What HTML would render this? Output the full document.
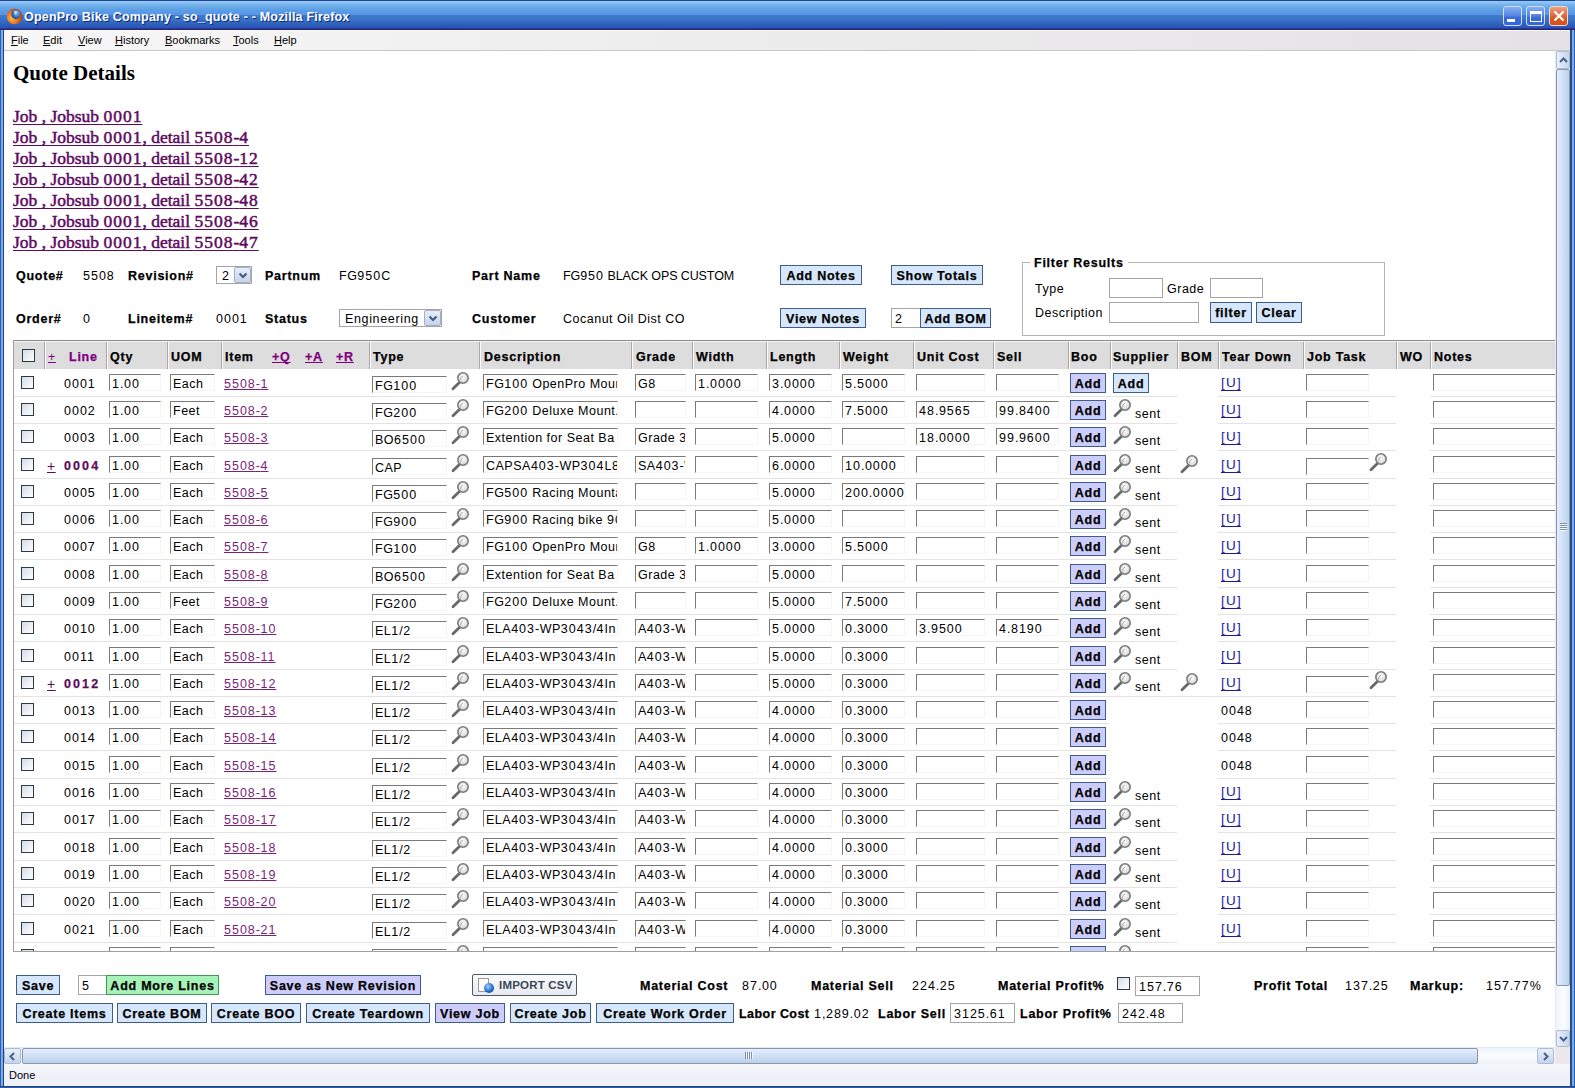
<!DOCTYPE html><html><head><meta charset="utf-8"><style>
*{margin:0;padding:0;box-sizing:border-box;text-decoration-skip-ink:none}
html,body{width:1575px;height:1088px;overflow:hidden;background:#fff;font-family:"Liberation Sans", sans-serif;}
.a{position:absolute;white-space:nowrap}
.t{position:absolute;white-space:nowrap;font-size:12.5px;color:#000;line-height:1;letter-spacing:0.5px}
.b{font-weight:bold;letter-spacing:0.75px;-webkit-text-stroke:0.25px currentColor}
i.d{font-style:normal;letter-spacing:1px}
.b .nb i.d{letter-spacing:2.1px}
.b i.d, .btn i.d{letter-spacing:1.6px}
.inp{position:absolute;background:#fff;border-top:1px solid #7a7a7a;border-left:1px solid #7a7a7a;border-right:1px solid #f5f5f5;border-bottom:1px solid #f5f5f5;overflow:hidden}
.inp span{position:absolute;left:2px;top:3px;font-size:12.5px;line-height:1;white-space:nowrap;letter-spacing:0.5px}
.inp2{position:absolute;background:#fff;border:1px solid #a5a5a5;overflow:hidden}
.inp2 span{position:absolute;left:3px;top:4px;font-size:12.5px;line-height:1;white-space:nowrap;letter-spacing:0.5px}
.btn{position:absolute;background:#d6e6fb;border:1px solid #3e5d8a;font-weight:bold;font-size:12.5px;line-height:1;text-align:center;white-space:nowrap;color:#000;letter-spacing:0.75px;-webkit-text-stroke:0.25px #000}
.btn span{position:absolute;left:0;right:0;top:4px}
.pur{background:#cdcdfb}
.grn{background:#a6f2b8;border-color:#3f9a5a}
.cb{position:absolute;width:13px;height:13px;border:1px solid #2e3a46;background:linear-gradient(135deg,#d4dce6 0%,#eef2f6 60%,#fbfcfd 100%)}
.lnk{color:#7a1f7a;text-decoration:underline}
.sep{position:absolute;height:1px;background:#e3e3e3}
</style></head><body>
<div class="a" style="left:0;top:0;width:1575px;height:1088px;background:#2c58c4"></div>
<div class="a" style="left:0;top:0;width:1575px;height:30px;background:linear-gradient(#1a4888 0px,#1a4888 1px,#9ccaff 1px,#88bcf4 3px,#6cb0e6 6px,#5c9ee6 10px,#5a94e8 14.5px,#3a7cc8 15.5px,#3a6fcc 20px,#2e62b4 24px,#2a56c0 27px,#3048b8 28px,#24286e 29px,#24286e 30px)"></div>
<svg class="a" style="left:5px;top:7px" width="18" height="18" viewBox="0 0 18 18"><defs><radialGradient id="ffg" cx="0.6" cy="0.35" r="0.6"><stop offset="0" stop-color="#7ec0f0"/><stop offset="1" stop-color="#1e4fa0"/></radialGradient><radialGradient id="ffo" cx="0.35" cy="0.6" r="0.7"><stop offset="0" stop-color="#ffc040"/><stop offset="0.6" stop-color="#e86a1a"/><stop offset="1" stop-color="#a83010"/></radialGradient></defs><circle cx="9.5" cy="9.5" r="7.8" fill="url(#ffo)"/><circle cx="10.8" cy="7.6" r="4.6" fill="url(#ffg)"/><path d="M9 4.5 Q11 3.5 12.5 5 Q11 6 10.5 8 Q9.5 6.5 9 4.5Z" fill="#f0f4ff" opacity="0.8"/></svg>
<div class="a" style="left:24px;top:10px;font-size:12.5px;font-weight:bold;color:#fff;text-shadow:1px 1px 0 #0a2a80;letter-spacing:0.2px">OpenPro Bike Company - so_quote - - Mozilla Firefox</div>
<div class="a" style="left:1503px;top:6px;width:19px;height:20px;border:1px solid #d0e0fa;border-radius:3px;background:linear-gradient(#86aef2,#5a88e6 45%,#3a6ad8 60%,#3466d6)"><div class="a" style="left:3px;top:12px;width:8px;height:3px;background:#fff"></div></div>
<div class="a" style="left:1526px;top:6px;width:19px;height:20px;border:1px solid #d0e0fa;border-radius:3px;background:linear-gradient(#86aef2,#5a88e6 45%,#3a6ad8 60%,#3466d6)"><div class="a" style="left:3px;top:4px;width:12px;height:11px;border:1px solid #fff;border-top:3px solid #fff"></div></div>
<div class="a" style="left:1549px;top:6px;width:19px;height:20px;border:1px solid #f2d8cc;border-radius:3px;background:linear-gradient(#eca088,#e0703e 45%,#d85a24 60%,#d45020)"><svg class="a" style="left:3px;top:3px" width="12" height="12"><path d="M1.5 1.5 L10.5 10.5 M10.5 1.5 L1.5 10.5" stroke="#fff" stroke-width="2.2"/></svg></div>
<div class="a" style="left:4px;top:30px;width:1566px;height:21px;background:linear-gradient(to right,#f7f7f7,#efeeef 40%,#e4e2e4);border-top:1px solid #fafafa;border-bottom:1px solid #c8c8c8"></div>
<div class="a" style="left:11px;top:34px;font-size:11px;color:#000"><u style="text-decoration:underline">F</u>ile</div>
<div class="a" style="left:43px;top:34px;font-size:11px;color:#000"><u style="text-decoration:underline">E</u>dit</div>
<div class="a" style="left:78px;top:34px;font-size:11px;color:#000"><u style="text-decoration:underline">V</u>iew</div>
<div class="a" style="left:115px;top:34px;font-size:11px;color:#000"><u style="text-decoration:underline">H</u>istory</div>
<div class="a" style="left:165px;top:34px;font-size:11px;color:#000"><u style="text-decoration:underline">B</u>ookmarks</div>
<div class="a" style="left:233px;top:34px;font-size:11px;color:#000"><u style="text-decoration:underline">T</u>ools</div>
<div class="a" style="left:274px;top:34px;font-size:11px;color:#000"><u style="text-decoration:underline">H</u>elp</div>
<div class="a" style="left:4px;top:51px;width:1566px;height:997px;background:#fff"></div>
<svg width="0" height="0" style="position:absolute"><defs><radialGradient id="mgrad" cx="0.45" cy="0.4" r="0.65"><stop offset="0" stop-color="#ffffff"/><stop offset="1" stop-color="#d0d0d0"/></radialGradient></defs></svg>
<div class="a" style="left:13px;top:61px;font-family:'Liberation Serif',serif;font-size:21px;font-weight:bold;color:#000">Quote Details</div>
<div class="a lnk" style="left:13px;top:108px;font-family:'Liberation Serif',serif;font-size:17.5px;line-height:1;color:#5e0a5e;-webkit-text-stroke:0.5px #5e0a5e;text-underline-offset:2px">Job , Jobsub <i class="d">0001</i></div>
<div class="a lnk" style="left:13px;top:129px;font-family:'Liberation Serif',serif;font-size:17.5px;line-height:1;color:#5e0a5e;-webkit-text-stroke:0.5px #5e0a5e;text-underline-offset:2px">Job , Jobsub <i class="d">0001</i>, detail <i class="d">5508</i>-<i class="d">4</i></div>
<div class="a lnk" style="left:13px;top:150px;font-family:'Liberation Serif',serif;font-size:17.5px;line-height:1;color:#5e0a5e;-webkit-text-stroke:0.5px #5e0a5e;text-underline-offset:2px">Job , Jobsub <i class="d">0001</i>, detail <i class="d">5508</i>-<i class="d">12</i></div>
<div class="a lnk" style="left:13px;top:171px;font-family:'Liberation Serif',serif;font-size:17.5px;line-height:1;color:#5e0a5e;-webkit-text-stroke:0.5px #5e0a5e;text-underline-offset:2px">Job , Jobsub <i class="d">0001</i>, detail <i class="d">5508</i>-<i class="d">42</i></div>
<div class="a lnk" style="left:13px;top:192px;font-family:'Liberation Serif',serif;font-size:17.5px;line-height:1;color:#5e0a5e;-webkit-text-stroke:0.5px #5e0a5e;text-underline-offset:2px">Job , Jobsub <i class="d">0001</i>, detail <i class="d">5508</i>-<i class="d">48</i></div>
<div class="a lnk" style="left:13px;top:213px;font-family:'Liberation Serif',serif;font-size:17.5px;line-height:1;color:#5e0a5e;-webkit-text-stroke:0.5px #5e0a5e;text-underline-offset:2px">Job , Jobsub <i class="d">0001</i>, detail <i class="d">5508</i>-<i class="d">46</i></div>
<div class="a lnk" style="left:13px;top:234px;font-family:'Liberation Serif',serif;font-size:17.5px;line-height:1;color:#5e0a5e;-webkit-text-stroke:0.5px #5e0a5e;text-underline-offset:2px">Job , Jobsub <i class="d">0001</i>, detail <i class="d">5508</i>-<i class="d">47</i></div>
<div class="t b" style="left:16px;top:270px;">Quote#</div>
<div class="t" style="left:83px;top:270px;"><i class="d">5508</i></div>
<div class="t b" style="left:128px;top:270px;">Revision#</div>
<div class="t b" style="left:265px;top:270px;">Partnum</div>
<div class="t" style="left:339px;top:270px;">FG<i class="d">950</i>C</div>
<div class="t b" style="left:472px;top:270px;">Part Name</div>
<div class="t" style="left:563px;top:270px;letter-spacing:-0.1px">FG<i class="d">950</i> BLACK OPS CUSTOM</div>
<div class="t b" style="left:16px;top:313px;">Order#</div>
<div class="t" style="left:83px;top:313px;"><i class="d">0</i></div>
<div class="t b" style="left:128px;top:313px;">Lineitem#</div>
<div class="t" style="left:216px;top:313px;"><i class="d">0001</i></div>
<div class="t b" style="left:265px;top:313px;">Status</div>
<div class="t b" style="left:472px;top:313px;">Customer</div>
<div class="t" style="left:563px;top:313px;">Cocanut Oil Dist CO</div>
<div class="a" style="left:216px;top:266px;width:36px;height:18px;border:1px solid #a4a4a4;background:#fff"><span class="a" style="left:5px;top:2px;font-size:12.5px;letter-spacing:0.65px"><i class="d">2</i></span><div class="a" style="right:0;top:0;width:17px;height:16px;background:linear-gradient(#e6eefb,#c4d4ee);border:1px solid #a8b0c0;border-radius:2px"><svg class="a" style="left:3px;top:4px" width="10" height="7"><path d="M1.5 1.5 L5 5 L8.5 1.5" stroke="#4a5a78" stroke-width="2.2" fill="none"/></svg></div></div>
<div class="a" style="left:339px;top:309px;width:103px;height:18px;border:1px solid #a4a4a4;background:#fff"><span class="a" style="left:5px;top:2px;font-size:12.5px;letter-spacing:0.65px">Engineering</span><div class="a" style="right:0;top:0;width:17px;height:16px;background:linear-gradient(#e6eefb,#c4d4ee);border:1px solid #a8b0c0;border-radius:2px"><svg class="a" style="left:3px;top:4px" width="10" height="7"><path d="M1.5 1.5 L5 5 L8.5 1.5" stroke="#4a5a78" stroke-width="2.2" fill="none"/></svg></div></div>
<div class="btn " style="left:780px;top:265px;width:82px;height:20px"><span style="top:4px">Add Notes</span></div>
<div class="btn " style="left:891px;top:265px;width:92px;height:20px"><span style="top:4px">Show Totals</span></div>
<div class="btn " style="left:780px;top:308px;width:86px;height:20px"><span style="top:4px">View Notes</span></div>
<div class="inp2" style="left:891px;top:308px;width:30px;height:20px"><span style="top:4px"><i class="d">2</i></span></div>
<div class="btn " style="left:920px;top:308px;width:71px;height:20px"><span style="top:4px">Add BOM</span></div>
<div class="a" style="left:1022px;top:262px;width:363px;height:74px;border:1px solid #b4b4b4"></div>
<div class="a b" style="left:1030px;top:257px;padding:0 4px;background:#fff;font-size:12.5px;font-weight:bold;line-height:1">Filter Results</div>
<div class="t" style="left:1035px;top:283px;">Type</div>
<div class="t" style="left:1167px;top:283px;">Grade</div>
<div class="t" style="left:1035px;top:307px;">Description</div>
<div class="inp2" style="left:1109px;top:278px;width:54px;height:20px"></div>
<div class="inp2" style="left:1210px;top:278px;width:53px;height:20px"></div>
<div class="inp2" style="left:1109px;top:302px;width:90px;height:21px"></div>
<div class="btn " style="left:1210px;top:302px;width:42px;height:21px"><span style="top:4px">filter</span></div>
<div class="btn " style="left:1256px;top:302px;width:46px;height:21px"><span style="top:4px">Clear</span></div>
<div class="a" style="left:13px;top:340px;width:1542px;height:612px;border-left:1px solid #a0a0a0;border-top:1px solid #8c8c8c;border-bottom:1px solid #a0a0a0;overflow:hidden" id="tbl">
<div class="a" style="left:0;top:0;width:1541px;height:28px;background:#dddddd;border-top:1px solid #f4f4f4"></div>
<div class="a" style="left:30px;top:1px;width:1px;height:27px;background:#a8a8a8"></div><div class="a" style="left:31px;top:1px;width:1px;height:27px;background:#fbfbfb"></div>
<div class="a" style="left:92px;top:1px;width:1px;height:27px;background:#a8a8a8"></div><div class="a" style="left:93px;top:1px;width:1px;height:27px;background:#fbfbfb"></div>
<div class="a" style="left:153px;top:1px;width:1px;height:27px;background:#a8a8a8"></div><div class="a" style="left:154px;top:1px;width:1px;height:27px;background:#fbfbfb"></div>
<div class="a" style="left:207px;top:1px;width:1px;height:27px;background:#a8a8a8"></div><div class="a" style="left:208px;top:1px;width:1px;height:27px;background:#fbfbfb"></div>
<div class="a" style="left:355px;top:1px;width:1px;height:27px;background:#a8a8a8"></div><div class="a" style="left:356px;top:1px;width:1px;height:27px;background:#fbfbfb"></div>
<div class="a" style="left:465px;top:1px;width:1px;height:27px;background:#a8a8a8"></div><div class="a" style="left:466px;top:1px;width:1px;height:27px;background:#fbfbfb"></div>
<div class="a" style="left:617px;top:1px;width:1px;height:27px;background:#a8a8a8"></div><div class="a" style="left:618px;top:1px;width:1px;height:27px;background:#fbfbfb"></div>
<div class="a" style="left:678px;top:1px;width:1px;height:27px;background:#a8a8a8"></div><div class="a" style="left:679px;top:1px;width:1px;height:27px;background:#fbfbfb"></div>
<div class="a" style="left:752px;top:1px;width:1px;height:27px;background:#a8a8a8"></div><div class="a" style="left:753px;top:1px;width:1px;height:27px;background:#fbfbfb"></div>
<div class="a" style="left:825px;top:1px;width:1px;height:27px;background:#a8a8a8"></div><div class="a" style="left:826px;top:1px;width:1px;height:27px;background:#fbfbfb"></div>
<div class="a" style="left:899px;top:1px;width:1px;height:27px;background:#a8a8a8"></div><div class="a" style="left:900px;top:1px;width:1px;height:27px;background:#fbfbfb"></div>
<div class="a" style="left:979px;top:1px;width:1px;height:27px;background:#a8a8a8"></div><div class="a" style="left:980px;top:1px;width:1px;height:27px;background:#fbfbfb"></div>
<div class="a" style="left:1054px;top:1px;width:1px;height:27px;background:#a8a8a8"></div><div class="a" style="left:1055px;top:1px;width:1px;height:27px;background:#fbfbfb"></div>
<div class="a" style="left:1096px;top:1px;width:1px;height:27px;background:#a8a8a8"></div><div class="a" style="left:1097px;top:1px;width:1px;height:27px;background:#fbfbfb"></div>
<div class="a" style="left:1163px;top:1px;width:1px;height:27px;background:#a8a8a8"></div><div class="a" style="left:1164px;top:1px;width:1px;height:27px;background:#fbfbfb"></div>
<div class="a" style="left:1204px;top:1px;width:1px;height:27px;background:#a8a8a8"></div><div class="a" style="left:1205px;top:1px;width:1px;height:27px;background:#fbfbfb"></div>
<div class="a" style="left:1289px;top:1px;width:1px;height:27px;background:#a8a8a8"></div><div class="a" style="left:1290px;top:1px;width:1px;height:27px;background:#fbfbfb"></div>
<div class="a" style="left:1382px;top:1px;width:1px;height:27px;background:#a8a8a8"></div><div class="a" style="left:1383px;top:1px;width:1px;height:27px;background:#fbfbfb"></div>
<div class="a" style="left:1416px;top:1px;width:1px;height:27px;background:#a8a8a8"></div><div class="a" style="left:1417px;top:1px;width:1px;height:27px;background:#fbfbfb"></div>
<div class="cb" style="left:8px;top:8px"></div>
<div class="t" style="left:34px;top:10px;"><span class="lnk" style="color:#800080;font-weight:normal">+</span></div>
<div class="t b" style="left:55px;top:10px;color:#800080">Line</div>
<div class="t b" style="left:96px;top:10px;">Qty</div>
<div class="t b" style="left:157px;top:10px;">UOM</div>
<div class="t b" style="left:211px;top:10px;">Item</div>
<div class="t b" style="left:258px;top:10px;color:#800080;text-decoration:underline">+Q</div>
<div class="t b" style="left:291px;top:10px;color:#800080;text-decoration:underline">+A</div>
<div class="t b" style="left:322px;top:10px;color:#800080;text-decoration:underline">+R</div>
<div class="t b" style="left:359px;top:10px;">Type</div>
<div class="t b" style="left:470px;top:10px;">Description</div>
<div class="t b" style="left:622px;top:10px;">Grade</div>
<div class="t b" style="left:682px;top:10px;">Width</div>
<div class="t b" style="left:756px;top:10px;">Length</div>
<div class="t b" style="left:829px;top:10px;">Weight</div>
<div class="t b" style="left:903px;top:10px;">Unit Cost</div>
<div class="t b" style="left:983px;top:10px;">Sell</div>
<div class="t b" style="left:1057px;top:10px;">Boo</div>
<div class="t b" style="left:1099px;top:10px;">Supplier</div>
<div class="t b" style="left:1167px;top:10px;">BOM</div>
<div class="t b" style="left:1208px;top:10px;">Tear Down</div>
<div class="t b" style="left:1293px;top:10px;">Job Task</div>
<div class="t b" style="left:1386px;top:10px;">WO</div>
<div class="t b" style="left:1420px;top:10px;">Notes</div>
<div class="sep" style="left:0px;top:55px;width:1163px"></div>
<div class="sep" style="left:1204px;top:55px;width:178px"></div>
<div class="sep" style="left:1416px;top:55px;width:125px"></div>
<div class="cb" style="left:7px;top:35px"></div>
<div class="t" style="left:50px;top:37px;"><i class="d">0001</i></div>
<div class="inp" style="left:95px;top:33px;width:52px;height:17px"><span><i class="d">1</i>.<i class="d">00</i></span></div>
<div class="inp" style="left:156px;top:33px;width:45px;height:17px"><span>Each</span></div>
<div class="t" style="left:210px;top:37px;"><span class="lnk"><i class="d">5508</i>-<i class="d">1</i></span></div>
<div class="inp" style="left:358px;top:35px;width:75px;height:17px"><span>FG<i class="d">100</i></span></div>
<svg class="a" style="left:437px;top:31px" width="19" height="19" viewBox="0 0 19 19"><line x1="2" y1="16.8" x2="8.4" y2="10.6" stroke="#686868" stroke-width="2.8" stroke-linecap="round"/><circle cx="12" cy="6" r="5.2" fill="url(#mgrad)" stroke="#7c7c7c" stroke-width="1.6"/><path d="M9.6 8.2 Q9.2 5.2 12 4.2" stroke="#a8a8a8" stroke-width="1" fill="none"/></svg>
<div class="inp" style="left:469px;top:33px;width:135px;height:17px"><span>FG<i class="d">100</i> OpenPro Mour</span></div>
<div class="inp" style="left:621px;top:33px;width:51px;height:17px"><span>G<i class="d">8</i></span></div>
<div class="inp" style="left:681px;top:33px;width:63px;height:17px"><span><i class="d">1</i>.<i class="d">0000</i></span></div>
<div class="inp" style="left:755px;top:33px;width:63px;height:17px"><span><i class="d">3</i>.<i class="d">0000</i></span></div>
<div class="inp" style="left:828px;top:33px;width:63px;height:17px"><span><i class="d">5</i>.<i class="d">5000</i></span></div>
<div class="inp" style="left:902px;top:33px;width:69px;height:17px"><span></span></div>
<div class="inp" style="left:982px;top:33px;width:63px;height:17px"><span></span></div>
<div class="btn pur" style="left:1056px;top:32px;width:36px;height:20px"><span style="top:4px">Add</span></div>
<div class="btn" style="left:1099px;top:32px;width:36px;height:20px"><span style="top:4px">Add</span></div>
<div class="t" style="left:1207px;top:35px;"><span style="color:#1a1a9a;text-decoration:underline;text-underline-offset:3px;font-size:13.5px;letter-spacing:1.3px">[U<span style="letter-spacing:0">]</span></span></div>
<div class="inp" style="left:1292px;top:33px;width:63px;height:17px"><span></span></div>
<div class="inp" style="left:1419px;top:33px;width:125px;height:17px"><span></span></div>
<div class="sep" style="left:0px;top:82px;width:1163px"></div>
<div class="sep" style="left:1204px;top:82px;width:178px"></div>
<div class="sep" style="left:1416px;top:82px;width:125px"></div>
<div class="cb" style="left:7px;top:62px"></div>
<div class="t" style="left:50px;top:64px;"><i class="d">0002</i></div>
<div class="inp" style="left:95px;top:60px;width:52px;height:17px"><span><i class="d">1</i>.<i class="d">00</i></span></div>
<div class="inp" style="left:156px;top:60px;width:45px;height:17px"><span>Feet</span></div>
<div class="t" style="left:210px;top:64px;"><span class="lnk"><i class="d">5508</i>-<i class="d">2</i></span></div>
<div class="inp" style="left:358px;top:62px;width:75px;height:17px"><span>FG<i class="d">200</i></span></div>
<svg class="a" style="left:437px;top:58px" width="19" height="19" viewBox="0 0 19 19"><line x1="2" y1="16.8" x2="8.4" y2="10.6" stroke="#686868" stroke-width="2.8" stroke-linecap="round"/><circle cx="12" cy="6" r="5.2" fill="url(#mgrad)" stroke="#7c7c7c" stroke-width="1.6"/><path d="M9.6 8.2 Q9.2 5.2 12 4.2" stroke="#a8a8a8" stroke-width="1" fill="none"/></svg>
<div class="inp" style="left:469px;top:60px;width:135px;height:17px"><span>FG<i class="d">200</i> Deluxe Mount.</span></div>
<div class="inp" style="left:621px;top:60px;width:51px;height:17px"><span></span></div>
<div class="inp" style="left:681px;top:60px;width:63px;height:17px"><span></span></div>
<div class="inp" style="left:755px;top:60px;width:63px;height:17px"><span><i class="d">4</i>.<i class="d">0000</i></span></div>
<div class="inp" style="left:828px;top:60px;width:63px;height:17px"><span><i class="d">7</i>.<i class="d">5000</i></span></div>
<div class="inp" style="left:902px;top:60px;width:69px;height:17px"><span><i class="d">48</i>.<i class="d">9565</i></span></div>
<div class="inp" style="left:982px;top:60px;width:63px;height:17px"><span><i class="d">99</i>.<i class="d">8400</i></span></div>
<div class="btn pur" style="left:1056px;top:59px;width:36px;height:20px"><span style="top:4px">Add</span></div>
<svg class="a" style="left:1099px;top:58px" width="19" height="19" viewBox="0 0 19 19"><line x1="2" y1="16.8" x2="8.4" y2="10.6" stroke="#686868" stroke-width="2.8" stroke-linecap="round"/><circle cx="12" cy="6" r="5.2" fill="url(#mgrad)" stroke="#7c7c7c" stroke-width="1.6"/><path d="M9.6 8.2 Q9.2 5.2 12 4.2" stroke="#a8a8a8" stroke-width="1" fill="none"/></svg>
<div class="t" style="left:1121px;top:67px;">sent</div>
<div class="t" style="left:1207px;top:62px;"><span style="color:#1a1a9a;text-decoration:underline;text-underline-offset:3px;font-size:13.5px;letter-spacing:1.3px">[U<span style="letter-spacing:0">]</span></span></div>
<div class="inp" style="left:1292px;top:60px;width:63px;height:17px"><span></span></div>
<div class="inp" style="left:1419px;top:60px;width:125px;height:17px"><span></span></div>
<div class="sep" style="left:0px;top:109px;width:1163px"></div>
<div class="sep" style="left:1204px;top:109px;width:178px"></div>
<div class="sep" style="left:1416px;top:109px;width:125px"></div>
<div class="cb" style="left:7px;top:89px"></div>
<div class="t" style="left:50px;top:91px;"><i class="d">0003</i></div>
<div class="inp" style="left:95px;top:87px;width:52px;height:17px"><span><i class="d">1</i>.<i class="d">00</i></span></div>
<div class="inp" style="left:156px;top:87px;width:45px;height:17px"><span>Each</span></div>
<div class="t" style="left:210px;top:91px;"><span class="lnk"><i class="d">5508</i>-<i class="d">3</i></span></div>
<div class="inp" style="left:358px;top:89px;width:75px;height:17px"><span>BO<i class="d">6500</i></span></div>
<svg class="a" style="left:437px;top:85px" width="19" height="19" viewBox="0 0 19 19"><line x1="2" y1="16.8" x2="8.4" y2="10.6" stroke="#686868" stroke-width="2.8" stroke-linecap="round"/><circle cx="12" cy="6" r="5.2" fill="url(#mgrad)" stroke="#7c7c7c" stroke-width="1.6"/><path d="M9.6 8.2 Q9.2 5.2 12 4.2" stroke="#a8a8a8" stroke-width="1" fill="none"/></svg>
<div class="inp" style="left:469px;top:87px;width:135px;height:17px"><span>Extention for Seat Ba</span></div>
<div class="inp" style="left:621px;top:87px;width:51px;height:17px"><span>Grade <i class="d">3</i></span></div>
<div class="inp" style="left:681px;top:87px;width:63px;height:17px"><span></span></div>
<div class="inp" style="left:755px;top:87px;width:63px;height:17px"><span><i class="d">5</i>.<i class="d">0000</i></span></div>
<div class="inp" style="left:828px;top:87px;width:63px;height:17px"><span></span></div>
<div class="inp" style="left:902px;top:87px;width:69px;height:17px"><span><i class="d">18</i>.<i class="d">0000</i></span></div>
<div class="inp" style="left:982px;top:87px;width:63px;height:17px"><span><i class="d">99</i>.<i class="d">9600</i></span></div>
<div class="btn pur" style="left:1056px;top:86px;width:36px;height:20px"><span style="top:4px">Add</span></div>
<svg class="a" style="left:1099px;top:85px" width="19" height="19" viewBox="0 0 19 19"><line x1="2" y1="16.8" x2="8.4" y2="10.6" stroke="#686868" stroke-width="2.8" stroke-linecap="round"/><circle cx="12" cy="6" r="5.2" fill="url(#mgrad)" stroke="#7c7c7c" stroke-width="1.6"/><path d="M9.6 8.2 Q9.2 5.2 12 4.2" stroke="#a8a8a8" stroke-width="1" fill="none"/></svg>
<div class="t" style="left:1121px;top:94px;">sent</div>
<div class="t" style="left:1207px;top:89px;"><span style="color:#1a1a9a;text-decoration:underline;text-underline-offset:3px;font-size:13.5px;letter-spacing:1.3px">[U<span style="letter-spacing:0">]</span></span></div>
<div class="inp" style="left:1292px;top:87px;width:63px;height:17px"><span></span></div>
<div class="inp" style="left:1419px;top:87px;width:125px;height:17px"><span></span></div>
<div class="sep" style="left:0px;top:137px;width:1204px"></div>
<div class="sep" style="left:1204px;top:137px;width:178px"></div>
<div class="sep" style="left:1416px;top:137px;width:125px"></div>
<div class="cb" style="left:7px;top:117px"></div>
<div class="t" style="left:33px;top:118px;"><span class="lnk" style="color:#5c0c5c;font-size:14px;text-underline-offset:0.5px">+</span></div>
<div class="t b" style="left:50px;top:119px;color:#5c0c5c"><span class="nb"><i class="d">0004</i></span></div>
<div class="inp" style="left:95px;top:115px;width:52px;height:17px"><span><i class="d">1</i>.<i class="d">00</i></span></div>
<div class="inp" style="left:156px;top:115px;width:45px;height:17px"><span>Each</span></div>
<div class="t" style="left:210px;top:119px;"><span class="lnk"><i class="d">5508</i>-<i class="d">4</i></span></div>
<div class="inp" style="left:358px;top:117px;width:75px;height:17px"><span>CAP</span></div>
<svg class="a" style="left:437px;top:113px" width="19" height="19" viewBox="0 0 19 19"><line x1="2" y1="16.8" x2="8.4" y2="10.6" stroke="#686868" stroke-width="2.8" stroke-linecap="round"/><circle cx="12" cy="6" r="5.2" fill="url(#mgrad)" stroke="#7c7c7c" stroke-width="1.6"/><path d="M9.6 8.2 Q9.2 5.2 12 4.2" stroke="#a8a8a8" stroke-width="1" fill="none"/></svg>
<div class="inp" style="left:469px;top:115px;width:135px;height:17px"><span>CAPSA<i class="d">403</i>-WP<i class="d">304</i>L<i class="d">8</i>:</span></div>
<div class="inp" style="left:621px;top:115px;width:51px;height:17px"><span>SA<i class="d">403</i>-W</span></div>
<div class="inp" style="left:681px;top:115px;width:63px;height:17px"><span></span></div>
<div class="inp" style="left:755px;top:115px;width:63px;height:17px"><span><i class="d">6</i>.<i class="d">0000</i></span></div>
<div class="inp" style="left:828px;top:115px;width:63px;height:17px"><span><i class="d">10</i>.<i class="d">0000</i></span></div>
<div class="inp" style="left:902px;top:115px;width:69px;height:17px"><span></span></div>
<div class="inp" style="left:982px;top:115px;width:63px;height:17px"><span></span></div>
<div class="btn pur" style="left:1056px;top:114px;width:36px;height:20px"><span style="top:4px">Add</span></div>
<svg class="a" style="left:1099px;top:113px" width="19" height="19" viewBox="0 0 19 19"><line x1="2" y1="16.8" x2="8.4" y2="10.6" stroke="#686868" stroke-width="2.8" stroke-linecap="round"/><circle cx="12" cy="6" r="5.2" fill="url(#mgrad)" stroke="#7c7c7c" stroke-width="1.6"/><path d="M9.6 8.2 Q9.2 5.2 12 4.2" stroke="#a8a8a8" stroke-width="1" fill="none"/></svg>
<div class="t" style="left:1121px;top:122px;">sent</div>
<svg class="a" style="left:1166px;top:114px" width="19" height="19" viewBox="0 0 19 19"><line x1="2" y1="16.8" x2="8.4" y2="10.6" stroke="#686868" stroke-width="2.8" stroke-linecap="round"/><circle cx="12" cy="6" r="5.2" fill="url(#mgrad)" stroke="#7c7c7c" stroke-width="1.6"/><path d="M9.6 8.2 Q9.2 5.2 12 4.2" stroke="#a8a8a8" stroke-width="1" fill="none"/></svg>
<div class="t" style="left:1207px;top:117px;"><span style="color:#1a1a9a;text-decoration:underline;text-underline-offset:3px;font-size:13.5px;letter-spacing:1.3px">[U<span style="letter-spacing:0">]</span></span></div>
<div class="inp" style="left:1292px;top:117px;width:63px;height:17px"><span></span></div>
<svg class="a" style="left:1355px;top:112px" width="19" height="19" viewBox="0 0 19 19"><line x1="2" y1="16.8" x2="8.4" y2="10.6" stroke="#686868" stroke-width="2.8" stroke-linecap="round"/><circle cx="12" cy="6" r="5.2" fill="url(#mgrad)" stroke="#7c7c7c" stroke-width="1.6"/><path d="M9.6 8.2 Q9.2 5.2 12 4.2" stroke="#a8a8a8" stroke-width="1" fill="none"/></svg>
<div class="inp" style="left:1419px;top:115px;width:125px;height:17px"><span></span></div>
<div class="sep" style="left:0px;top:164px;width:1163px"></div>
<div class="sep" style="left:1204px;top:164px;width:178px"></div>
<div class="sep" style="left:1416px;top:164px;width:125px"></div>
<div class="cb" style="left:7px;top:144px"></div>
<div class="t" style="left:50px;top:146px;"><i class="d">0005</i></div>
<div class="inp" style="left:95px;top:142px;width:52px;height:17px"><span><i class="d">1</i>.<i class="d">00</i></span></div>
<div class="inp" style="left:156px;top:142px;width:45px;height:17px"><span>Each</span></div>
<div class="t" style="left:210px;top:146px;"><span class="lnk"><i class="d">5508</i>-<i class="d">5</i></span></div>
<div class="inp" style="left:358px;top:144px;width:75px;height:17px"><span>FG<i class="d">500</i></span></div>
<svg class="a" style="left:437px;top:140px" width="19" height="19" viewBox="0 0 19 19"><line x1="2" y1="16.8" x2="8.4" y2="10.6" stroke="#686868" stroke-width="2.8" stroke-linecap="round"/><circle cx="12" cy="6" r="5.2" fill="url(#mgrad)" stroke="#7c7c7c" stroke-width="1.6"/><path d="M9.6 8.2 Q9.2 5.2 12 4.2" stroke="#a8a8a8" stroke-width="1" fill="none"/></svg>
<div class="inp" style="left:469px;top:142px;width:135px;height:17px"><span>FG<i class="d">500</i> Racing Mounta</span></div>
<div class="inp" style="left:621px;top:142px;width:51px;height:17px"><span></span></div>
<div class="inp" style="left:681px;top:142px;width:63px;height:17px"><span></span></div>
<div class="inp" style="left:755px;top:142px;width:63px;height:17px"><span><i class="d">5</i>.<i class="d">0000</i></span></div>
<div class="inp" style="left:828px;top:142px;width:63px;height:17px"><span><i class="d">200</i>.<i class="d">0000</i></span></div>
<div class="inp" style="left:902px;top:142px;width:69px;height:17px"><span></span></div>
<div class="inp" style="left:982px;top:142px;width:63px;height:17px"><span></span></div>
<div class="btn pur" style="left:1056px;top:141px;width:36px;height:20px"><span style="top:4px">Add</span></div>
<svg class="a" style="left:1099px;top:140px" width="19" height="19" viewBox="0 0 19 19"><line x1="2" y1="16.8" x2="8.4" y2="10.6" stroke="#686868" stroke-width="2.8" stroke-linecap="round"/><circle cx="12" cy="6" r="5.2" fill="url(#mgrad)" stroke="#7c7c7c" stroke-width="1.6"/><path d="M9.6 8.2 Q9.2 5.2 12 4.2" stroke="#a8a8a8" stroke-width="1" fill="none"/></svg>
<div class="t" style="left:1121px;top:149px;">sent</div>
<div class="t" style="left:1207px;top:144px;"><span style="color:#1a1a9a;text-decoration:underline;text-underline-offset:3px;font-size:13.5px;letter-spacing:1.3px">[U<span style="letter-spacing:0">]</span></span></div>
<div class="inp" style="left:1292px;top:142px;width:63px;height:17px"><span></span></div>
<div class="inp" style="left:1419px;top:142px;width:125px;height:17px"><span></span></div>
<div class="sep" style="left:0px;top:191px;width:1163px"></div>
<div class="sep" style="left:1204px;top:191px;width:178px"></div>
<div class="sep" style="left:1416px;top:191px;width:125px"></div>
<div class="cb" style="left:7px;top:171px"></div>
<div class="t" style="left:50px;top:173px;"><i class="d">0006</i></div>
<div class="inp" style="left:95px;top:169px;width:52px;height:17px"><span><i class="d">1</i>.<i class="d">00</i></span></div>
<div class="inp" style="left:156px;top:169px;width:45px;height:17px"><span>Each</span></div>
<div class="t" style="left:210px;top:173px;"><span class="lnk"><i class="d">5508</i>-<i class="d">6</i></span></div>
<div class="inp" style="left:358px;top:171px;width:75px;height:17px"><span>FG<i class="d">900</i></span></div>
<svg class="a" style="left:437px;top:167px" width="19" height="19" viewBox="0 0 19 19"><line x1="2" y1="16.8" x2="8.4" y2="10.6" stroke="#686868" stroke-width="2.8" stroke-linecap="round"/><circle cx="12" cy="6" r="5.2" fill="url(#mgrad)" stroke="#7c7c7c" stroke-width="1.6"/><path d="M9.6 8.2 Q9.2 5.2 12 4.2" stroke="#a8a8a8" stroke-width="1" fill="none"/></svg>
<div class="inp" style="left:469px;top:169px;width:135px;height:17px"><span>FG<i class="d">900</i> Racing bike <i class="d">90</i></span></div>
<div class="inp" style="left:621px;top:169px;width:51px;height:17px"><span></span></div>
<div class="inp" style="left:681px;top:169px;width:63px;height:17px"><span></span></div>
<div class="inp" style="left:755px;top:169px;width:63px;height:17px"><span><i class="d">5</i>.<i class="d">0000</i></span></div>
<div class="inp" style="left:828px;top:169px;width:63px;height:17px"><span></span></div>
<div class="inp" style="left:902px;top:169px;width:69px;height:17px"><span></span></div>
<div class="inp" style="left:982px;top:169px;width:63px;height:17px"><span></span></div>
<div class="btn pur" style="left:1056px;top:168px;width:36px;height:20px"><span style="top:4px">Add</span></div>
<svg class="a" style="left:1099px;top:167px" width="19" height="19" viewBox="0 0 19 19"><line x1="2" y1="16.8" x2="8.4" y2="10.6" stroke="#686868" stroke-width="2.8" stroke-linecap="round"/><circle cx="12" cy="6" r="5.2" fill="url(#mgrad)" stroke="#7c7c7c" stroke-width="1.6"/><path d="M9.6 8.2 Q9.2 5.2 12 4.2" stroke="#a8a8a8" stroke-width="1" fill="none"/></svg>
<div class="t" style="left:1121px;top:176px;">sent</div>
<div class="t" style="left:1207px;top:171px;"><span style="color:#1a1a9a;text-decoration:underline;text-underline-offset:3px;font-size:13.5px;letter-spacing:1.3px">[U<span style="letter-spacing:0">]</span></span></div>
<div class="inp" style="left:1292px;top:169px;width:63px;height:17px"><span></span></div>
<div class="inp" style="left:1419px;top:169px;width:125px;height:17px"><span></span></div>
<div class="sep" style="left:0px;top:218px;width:1163px"></div>
<div class="sep" style="left:1204px;top:218px;width:178px"></div>
<div class="sep" style="left:1416px;top:218px;width:125px"></div>
<div class="cb" style="left:7px;top:198px"></div>
<div class="t" style="left:50px;top:200px;"><i class="d">0007</i></div>
<div class="inp" style="left:95px;top:196px;width:52px;height:17px"><span><i class="d">1</i>.<i class="d">00</i></span></div>
<div class="inp" style="left:156px;top:196px;width:45px;height:17px"><span>Each</span></div>
<div class="t" style="left:210px;top:200px;"><span class="lnk"><i class="d">5508</i>-<i class="d">7</i></span></div>
<div class="inp" style="left:358px;top:198px;width:75px;height:17px"><span>FG<i class="d">100</i></span></div>
<svg class="a" style="left:437px;top:194px" width="19" height="19" viewBox="0 0 19 19"><line x1="2" y1="16.8" x2="8.4" y2="10.6" stroke="#686868" stroke-width="2.8" stroke-linecap="round"/><circle cx="12" cy="6" r="5.2" fill="url(#mgrad)" stroke="#7c7c7c" stroke-width="1.6"/><path d="M9.6 8.2 Q9.2 5.2 12 4.2" stroke="#a8a8a8" stroke-width="1" fill="none"/></svg>
<div class="inp" style="left:469px;top:196px;width:135px;height:17px"><span>FG<i class="d">100</i> OpenPro Mour</span></div>
<div class="inp" style="left:621px;top:196px;width:51px;height:17px"><span>G<i class="d">8</i></span></div>
<div class="inp" style="left:681px;top:196px;width:63px;height:17px"><span><i class="d">1</i>.<i class="d">0000</i></span></div>
<div class="inp" style="left:755px;top:196px;width:63px;height:17px"><span><i class="d">3</i>.<i class="d">0000</i></span></div>
<div class="inp" style="left:828px;top:196px;width:63px;height:17px"><span><i class="d">5</i>.<i class="d">5000</i></span></div>
<div class="inp" style="left:902px;top:196px;width:69px;height:17px"><span></span></div>
<div class="inp" style="left:982px;top:196px;width:63px;height:17px"><span></span></div>
<div class="btn pur" style="left:1056px;top:195px;width:36px;height:20px"><span style="top:4px">Add</span></div>
<svg class="a" style="left:1099px;top:194px" width="19" height="19" viewBox="0 0 19 19"><line x1="2" y1="16.8" x2="8.4" y2="10.6" stroke="#686868" stroke-width="2.8" stroke-linecap="round"/><circle cx="12" cy="6" r="5.2" fill="url(#mgrad)" stroke="#7c7c7c" stroke-width="1.6"/><path d="M9.6 8.2 Q9.2 5.2 12 4.2" stroke="#a8a8a8" stroke-width="1" fill="none"/></svg>
<div class="t" style="left:1121px;top:203px;">sent</div>
<div class="t" style="left:1207px;top:198px;"><span style="color:#1a1a9a;text-decoration:underline;text-underline-offset:3px;font-size:13.5px;letter-spacing:1.3px">[U<span style="letter-spacing:0">]</span></span></div>
<div class="inp" style="left:1292px;top:196px;width:63px;height:17px"><span></span></div>
<div class="inp" style="left:1419px;top:196px;width:125px;height:17px"><span></span></div>
<div class="sep" style="left:0px;top:246px;width:1163px"></div>
<div class="sep" style="left:1204px;top:246px;width:178px"></div>
<div class="sep" style="left:1416px;top:246px;width:125px"></div>
<div class="cb" style="left:7px;top:226px"></div>
<div class="t" style="left:50px;top:228px;"><i class="d">0008</i></div>
<div class="inp" style="left:95px;top:224px;width:52px;height:17px"><span><i class="d">1</i>.<i class="d">00</i></span></div>
<div class="inp" style="left:156px;top:224px;width:45px;height:17px"><span>Each</span></div>
<div class="t" style="left:210px;top:228px;"><span class="lnk"><i class="d">5508</i>-<i class="d">8</i></span></div>
<div class="inp" style="left:358px;top:226px;width:75px;height:17px"><span>BO<i class="d">6500</i></span></div>
<svg class="a" style="left:437px;top:222px" width="19" height="19" viewBox="0 0 19 19"><line x1="2" y1="16.8" x2="8.4" y2="10.6" stroke="#686868" stroke-width="2.8" stroke-linecap="round"/><circle cx="12" cy="6" r="5.2" fill="url(#mgrad)" stroke="#7c7c7c" stroke-width="1.6"/><path d="M9.6 8.2 Q9.2 5.2 12 4.2" stroke="#a8a8a8" stroke-width="1" fill="none"/></svg>
<div class="inp" style="left:469px;top:224px;width:135px;height:17px"><span>Extention for Seat Ba</span></div>
<div class="inp" style="left:621px;top:224px;width:51px;height:17px"><span>Grade <i class="d">3</i></span></div>
<div class="inp" style="left:681px;top:224px;width:63px;height:17px"><span></span></div>
<div class="inp" style="left:755px;top:224px;width:63px;height:17px"><span><i class="d">5</i>.<i class="d">0000</i></span></div>
<div class="inp" style="left:828px;top:224px;width:63px;height:17px"><span></span></div>
<div class="inp" style="left:902px;top:224px;width:69px;height:17px"><span></span></div>
<div class="inp" style="left:982px;top:224px;width:63px;height:17px"><span></span></div>
<div class="btn pur" style="left:1056px;top:223px;width:36px;height:20px"><span style="top:4px">Add</span></div>
<svg class="a" style="left:1099px;top:222px" width="19" height="19" viewBox="0 0 19 19"><line x1="2" y1="16.8" x2="8.4" y2="10.6" stroke="#686868" stroke-width="2.8" stroke-linecap="round"/><circle cx="12" cy="6" r="5.2" fill="url(#mgrad)" stroke="#7c7c7c" stroke-width="1.6"/><path d="M9.6 8.2 Q9.2 5.2 12 4.2" stroke="#a8a8a8" stroke-width="1" fill="none"/></svg>
<div class="t" style="left:1121px;top:231px;">sent</div>
<div class="t" style="left:1207px;top:226px;"><span style="color:#1a1a9a;text-decoration:underline;text-underline-offset:3px;font-size:13.5px;letter-spacing:1.3px">[U<span style="letter-spacing:0">]</span></span></div>
<div class="inp" style="left:1292px;top:224px;width:63px;height:17px"><span></span></div>
<div class="inp" style="left:1419px;top:224px;width:125px;height:17px"><span></span></div>
<div class="sep" style="left:0px;top:273px;width:1163px"></div>
<div class="sep" style="left:1204px;top:273px;width:178px"></div>
<div class="sep" style="left:1416px;top:273px;width:125px"></div>
<div class="cb" style="left:7px;top:253px"></div>
<div class="t" style="left:50px;top:255px;"><i class="d">0009</i></div>
<div class="inp" style="left:95px;top:251px;width:52px;height:17px"><span><i class="d">1</i>.<i class="d">00</i></span></div>
<div class="inp" style="left:156px;top:251px;width:45px;height:17px"><span>Feet</span></div>
<div class="t" style="left:210px;top:255px;"><span class="lnk"><i class="d">5508</i>-<i class="d">9</i></span></div>
<div class="inp" style="left:358px;top:253px;width:75px;height:17px"><span>FG<i class="d">200</i></span></div>
<svg class="a" style="left:437px;top:249px" width="19" height="19" viewBox="0 0 19 19"><line x1="2" y1="16.8" x2="8.4" y2="10.6" stroke="#686868" stroke-width="2.8" stroke-linecap="round"/><circle cx="12" cy="6" r="5.2" fill="url(#mgrad)" stroke="#7c7c7c" stroke-width="1.6"/><path d="M9.6 8.2 Q9.2 5.2 12 4.2" stroke="#a8a8a8" stroke-width="1" fill="none"/></svg>
<div class="inp" style="left:469px;top:251px;width:135px;height:17px"><span>FG<i class="d">200</i> Deluxe Mount.</span></div>
<div class="inp" style="left:621px;top:251px;width:51px;height:17px"><span></span></div>
<div class="inp" style="left:681px;top:251px;width:63px;height:17px"><span></span></div>
<div class="inp" style="left:755px;top:251px;width:63px;height:17px"><span><i class="d">5</i>.<i class="d">0000</i></span></div>
<div class="inp" style="left:828px;top:251px;width:63px;height:17px"><span><i class="d">7</i>.<i class="d">5000</i></span></div>
<div class="inp" style="left:902px;top:251px;width:69px;height:17px"><span></span></div>
<div class="inp" style="left:982px;top:251px;width:63px;height:17px"><span></span></div>
<div class="btn pur" style="left:1056px;top:250px;width:36px;height:20px"><span style="top:4px">Add</span></div>
<svg class="a" style="left:1099px;top:249px" width="19" height="19" viewBox="0 0 19 19"><line x1="2" y1="16.8" x2="8.4" y2="10.6" stroke="#686868" stroke-width="2.8" stroke-linecap="round"/><circle cx="12" cy="6" r="5.2" fill="url(#mgrad)" stroke="#7c7c7c" stroke-width="1.6"/><path d="M9.6 8.2 Q9.2 5.2 12 4.2" stroke="#a8a8a8" stroke-width="1" fill="none"/></svg>
<div class="t" style="left:1121px;top:258px;">sent</div>
<div class="t" style="left:1207px;top:253px;"><span style="color:#1a1a9a;text-decoration:underline;text-underline-offset:3px;font-size:13.5px;letter-spacing:1.3px">[U<span style="letter-spacing:0">]</span></span></div>
<div class="inp" style="left:1292px;top:251px;width:63px;height:17px"><span></span></div>
<div class="inp" style="left:1419px;top:251px;width:125px;height:17px"><span></span></div>
<div class="sep" style="left:0px;top:300px;width:1163px"></div>
<div class="sep" style="left:1204px;top:300px;width:178px"></div>
<div class="sep" style="left:1416px;top:300px;width:125px"></div>
<div class="cb" style="left:7px;top:280px"></div>
<div class="t" style="left:50px;top:282px;"><i class="d">0010</i></div>
<div class="inp" style="left:95px;top:278px;width:52px;height:17px"><span><i class="d">1</i>.<i class="d">00</i></span></div>
<div class="inp" style="left:156px;top:278px;width:45px;height:17px"><span>Each</span></div>
<div class="t" style="left:210px;top:282px;"><span class="lnk"><i class="d">5508</i>-<i class="d">10</i></span></div>
<div class="inp" style="left:358px;top:280px;width:75px;height:17px"><span>EL<i class="d">1</i>/<i class="d">2</i></span></div>
<svg class="a" style="left:437px;top:276px" width="19" height="19" viewBox="0 0 19 19"><line x1="2" y1="16.8" x2="8.4" y2="10.6" stroke="#686868" stroke-width="2.8" stroke-linecap="round"/><circle cx="12" cy="6" r="5.2" fill="url(#mgrad)" stroke="#7c7c7c" stroke-width="1.6"/><path d="M9.6 8.2 Q9.2 5.2 12 4.2" stroke="#a8a8a8" stroke-width="1" fill="none"/></svg>
<div class="inp" style="left:469px;top:278px;width:135px;height:17px"><span>ELA<i class="d">403</i>-WP<i class="d">3043</i>/<i class="d">4</i>In</span></div>
<div class="inp" style="left:621px;top:278px;width:51px;height:17px"><span>A<i class="d">403</i>-W</span></div>
<div class="inp" style="left:681px;top:278px;width:63px;height:17px"><span></span></div>
<div class="inp" style="left:755px;top:278px;width:63px;height:17px"><span><i class="d">5</i>.<i class="d">0000</i></span></div>
<div class="inp" style="left:828px;top:278px;width:63px;height:17px"><span><i class="d">0</i>.<i class="d">3000</i></span></div>
<div class="inp" style="left:902px;top:278px;width:69px;height:17px"><span><i class="d">3</i>.<i class="d">9500</i></span></div>
<div class="inp" style="left:982px;top:278px;width:63px;height:17px"><span><i class="d">4</i>.<i class="d">8190</i></span></div>
<div class="btn pur" style="left:1056px;top:277px;width:36px;height:20px"><span style="top:4px">Add</span></div>
<svg class="a" style="left:1099px;top:276px" width="19" height="19" viewBox="0 0 19 19"><line x1="2" y1="16.8" x2="8.4" y2="10.6" stroke="#686868" stroke-width="2.8" stroke-linecap="round"/><circle cx="12" cy="6" r="5.2" fill="url(#mgrad)" stroke="#7c7c7c" stroke-width="1.6"/><path d="M9.6 8.2 Q9.2 5.2 12 4.2" stroke="#a8a8a8" stroke-width="1" fill="none"/></svg>
<div class="t" style="left:1121px;top:285px;">sent</div>
<div class="t" style="left:1207px;top:280px;"><span style="color:#1a1a9a;text-decoration:underline;text-underline-offset:3px;font-size:13.5px;letter-spacing:1.3px">[U<span style="letter-spacing:0">]</span></span></div>
<div class="inp" style="left:1292px;top:278px;width:63px;height:17px"><span></span></div>
<div class="inp" style="left:1419px;top:278px;width:125px;height:17px"><span></span></div>
<div class="sep" style="left:0px;top:328px;width:1163px"></div>
<div class="sep" style="left:1204px;top:328px;width:178px"></div>
<div class="sep" style="left:1416px;top:328px;width:125px"></div>
<div class="cb" style="left:7px;top:308px"></div>
<div class="t" style="left:50px;top:310px;"><i class="d">0011</i></div>
<div class="inp" style="left:95px;top:306px;width:52px;height:17px"><span><i class="d">1</i>.<i class="d">00</i></span></div>
<div class="inp" style="left:156px;top:306px;width:45px;height:17px"><span>Each</span></div>
<div class="t" style="left:210px;top:310px;"><span class="lnk"><i class="d">5508</i>-<i class="d">11</i></span></div>
<div class="inp" style="left:358px;top:308px;width:75px;height:17px"><span>EL<i class="d">1</i>/<i class="d">2</i></span></div>
<svg class="a" style="left:437px;top:304px" width="19" height="19" viewBox="0 0 19 19"><line x1="2" y1="16.8" x2="8.4" y2="10.6" stroke="#686868" stroke-width="2.8" stroke-linecap="round"/><circle cx="12" cy="6" r="5.2" fill="url(#mgrad)" stroke="#7c7c7c" stroke-width="1.6"/><path d="M9.6 8.2 Q9.2 5.2 12 4.2" stroke="#a8a8a8" stroke-width="1" fill="none"/></svg>
<div class="inp" style="left:469px;top:306px;width:135px;height:17px"><span>ELA<i class="d">403</i>-WP<i class="d">3043</i>/<i class="d">4</i>In</span></div>
<div class="inp" style="left:621px;top:306px;width:51px;height:17px"><span>A<i class="d">403</i>-W</span></div>
<div class="inp" style="left:681px;top:306px;width:63px;height:17px"><span></span></div>
<div class="inp" style="left:755px;top:306px;width:63px;height:17px"><span><i class="d">5</i>.<i class="d">0000</i></span></div>
<div class="inp" style="left:828px;top:306px;width:63px;height:17px"><span><i class="d">0</i>.<i class="d">3000</i></span></div>
<div class="inp" style="left:902px;top:306px;width:69px;height:17px"><span></span></div>
<div class="inp" style="left:982px;top:306px;width:63px;height:17px"><span></span></div>
<div class="btn pur" style="left:1056px;top:305px;width:36px;height:20px"><span style="top:4px">Add</span></div>
<svg class="a" style="left:1099px;top:304px" width="19" height="19" viewBox="0 0 19 19"><line x1="2" y1="16.8" x2="8.4" y2="10.6" stroke="#686868" stroke-width="2.8" stroke-linecap="round"/><circle cx="12" cy="6" r="5.2" fill="url(#mgrad)" stroke="#7c7c7c" stroke-width="1.6"/><path d="M9.6 8.2 Q9.2 5.2 12 4.2" stroke="#a8a8a8" stroke-width="1" fill="none"/></svg>
<div class="t" style="left:1121px;top:313px;">sent</div>
<div class="t" style="left:1207px;top:308px;"><span style="color:#1a1a9a;text-decoration:underline;text-underline-offset:3px;font-size:13.5px;letter-spacing:1.3px">[U<span style="letter-spacing:0">]</span></span></div>
<div class="inp" style="left:1292px;top:306px;width:63px;height:17px"><span></span></div>
<div class="inp" style="left:1419px;top:306px;width:125px;height:17px"><span></span></div>
<div class="sep" style="left:0px;top:355px;width:1204px"></div>
<div class="sep" style="left:1204px;top:355px;width:178px"></div>
<div class="sep" style="left:1416px;top:355px;width:125px"></div>
<div class="cb" style="left:7px;top:335px"></div>
<div class="t" style="left:33px;top:336px;"><span class="lnk" style="color:#5c0c5c;font-size:14px;text-underline-offset:0.5px">+</span></div>
<div class="t b" style="left:50px;top:337px;color:#5c0c5c"><span class="nb"><i class="d">0012</i></span></div>
<div class="inp" style="left:95px;top:333px;width:52px;height:17px"><span><i class="d">1</i>.<i class="d">00</i></span></div>
<div class="inp" style="left:156px;top:333px;width:45px;height:17px"><span>Each</span></div>
<div class="t" style="left:210px;top:337px;"><span class="lnk"><i class="d">5508</i>-<i class="d">12</i></span></div>
<div class="inp" style="left:358px;top:335px;width:75px;height:17px"><span>EL<i class="d">1</i>/<i class="d">2</i></span></div>
<svg class="a" style="left:437px;top:331px" width="19" height="19" viewBox="0 0 19 19"><line x1="2" y1="16.8" x2="8.4" y2="10.6" stroke="#686868" stroke-width="2.8" stroke-linecap="round"/><circle cx="12" cy="6" r="5.2" fill="url(#mgrad)" stroke="#7c7c7c" stroke-width="1.6"/><path d="M9.6 8.2 Q9.2 5.2 12 4.2" stroke="#a8a8a8" stroke-width="1" fill="none"/></svg>
<div class="inp" style="left:469px;top:333px;width:135px;height:17px"><span>ELA<i class="d">403</i>-WP<i class="d">3043</i>/<i class="d">4</i>In</span></div>
<div class="inp" style="left:621px;top:333px;width:51px;height:17px"><span>A<i class="d">403</i>-W</span></div>
<div class="inp" style="left:681px;top:333px;width:63px;height:17px"><span></span></div>
<div class="inp" style="left:755px;top:333px;width:63px;height:17px"><span><i class="d">5</i>.<i class="d">0000</i></span></div>
<div class="inp" style="left:828px;top:333px;width:63px;height:17px"><span><i class="d">0</i>.<i class="d">3000</i></span></div>
<div class="inp" style="left:902px;top:333px;width:69px;height:17px"><span></span></div>
<div class="inp" style="left:982px;top:333px;width:63px;height:17px"><span></span></div>
<div class="btn pur" style="left:1056px;top:332px;width:36px;height:20px"><span style="top:4px">Add</span></div>
<svg class="a" style="left:1099px;top:331px" width="19" height="19" viewBox="0 0 19 19"><line x1="2" y1="16.8" x2="8.4" y2="10.6" stroke="#686868" stroke-width="2.8" stroke-linecap="round"/><circle cx="12" cy="6" r="5.2" fill="url(#mgrad)" stroke="#7c7c7c" stroke-width="1.6"/><path d="M9.6 8.2 Q9.2 5.2 12 4.2" stroke="#a8a8a8" stroke-width="1" fill="none"/></svg>
<div class="t" style="left:1121px;top:340px;">sent</div>
<svg class="a" style="left:1166px;top:332px" width="19" height="19" viewBox="0 0 19 19"><line x1="2" y1="16.8" x2="8.4" y2="10.6" stroke="#686868" stroke-width="2.8" stroke-linecap="round"/><circle cx="12" cy="6" r="5.2" fill="url(#mgrad)" stroke="#7c7c7c" stroke-width="1.6"/><path d="M9.6 8.2 Q9.2 5.2 12 4.2" stroke="#a8a8a8" stroke-width="1" fill="none"/></svg>
<div class="t" style="left:1207px;top:335px;"><span style="color:#1a1a9a;text-decoration:underline;text-underline-offset:3px;font-size:13.5px;letter-spacing:1.3px">[U<span style="letter-spacing:0">]</span></span></div>
<div class="inp" style="left:1292px;top:335px;width:63px;height:17px"><span></span></div>
<svg class="a" style="left:1355px;top:330px" width="19" height="19" viewBox="0 0 19 19"><line x1="2" y1="16.8" x2="8.4" y2="10.6" stroke="#686868" stroke-width="2.8" stroke-linecap="round"/><circle cx="12" cy="6" r="5.2" fill="url(#mgrad)" stroke="#7c7c7c" stroke-width="1.6"/><path d="M9.6 8.2 Q9.2 5.2 12 4.2" stroke="#a8a8a8" stroke-width="1" fill="none"/></svg>
<div class="inp" style="left:1419px;top:333px;width:125px;height:17px"><span></span></div>
<div class="sep" style="left:0px;top:382px;width:1096px"></div>
<div class="sep" style="left:1204px;top:382px;width:178px"></div>
<div class="sep" style="left:1416px;top:382px;width:125px"></div>
<div class="cb" style="left:7px;top:362px"></div>
<div class="t" style="left:50px;top:364px;"><i class="d">0013</i></div>
<div class="inp" style="left:95px;top:360px;width:52px;height:17px"><span><i class="d">1</i>.<i class="d">00</i></span></div>
<div class="inp" style="left:156px;top:360px;width:45px;height:17px"><span>Each</span></div>
<div class="t" style="left:210px;top:364px;"><span class="lnk"><i class="d">5508</i>-<i class="d">13</i></span></div>
<div class="inp" style="left:358px;top:362px;width:75px;height:17px"><span>EL<i class="d">1</i>/<i class="d">2</i></span></div>
<svg class="a" style="left:437px;top:358px" width="19" height="19" viewBox="0 0 19 19"><line x1="2" y1="16.8" x2="8.4" y2="10.6" stroke="#686868" stroke-width="2.8" stroke-linecap="round"/><circle cx="12" cy="6" r="5.2" fill="url(#mgrad)" stroke="#7c7c7c" stroke-width="1.6"/><path d="M9.6 8.2 Q9.2 5.2 12 4.2" stroke="#a8a8a8" stroke-width="1" fill="none"/></svg>
<div class="inp" style="left:469px;top:360px;width:135px;height:17px"><span>ELA<i class="d">403</i>-WP<i class="d">3043</i>/<i class="d">4</i>In</span></div>
<div class="inp" style="left:621px;top:360px;width:51px;height:17px"><span>A<i class="d">403</i>-W</span></div>
<div class="inp" style="left:681px;top:360px;width:63px;height:17px"><span></span></div>
<div class="inp" style="left:755px;top:360px;width:63px;height:17px"><span><i class="d">4</i>.<i class="d">0000</i></span></div>
<div class="inp" style="left:828px;top:360px;width:63px;height:17px"><span><i class="d">0</i>.<i class="d">3000</i></span></div>
<div class="inp" style="left:902px;top:360px;width:69px;height:17px"><span></span></div>
<div class="inp" style="left:982px;top:360px;width:63px;height:17px"><span></span></div>
<div class="btn pur" style="left:1056px;top:359px;width:36px;height:20px"><span style="top:4px">Add</span></div>
<div class="t" style="left:1207px;top:364px;"><i class="d">0048</i></div>
<div class="inp" style="left:1292px;top:360px;width:63px;height:17px"><span></span></div>
<div class="inp" style="left:1419px;top:360px;width:125px;height:17px"><span></span></div>
<div class="sep" style="left:0px;top:409px;width:1096px"></div>
<div class="sep" style="left:1204px;top:409px;width:178px"></div>
<div class="sep" style="left:1416px;top:409px;width:125px"></div>
<div class="cb" style="left:7px;top:389px"></div>
<div class="t" style="left:50px;top:391px;"><i class="d">0014</i></div>
<div class="inp" style="left:95px;top:387px;width:52px;height:17px"><span><i class="d">1</i>.<i class="d">00</i></span></div>
<div class="inp" style="left:156px;top:387px;width:45px;height:17px"><span>Each</span></div>
<div class="t" style="left:210px;top:391px;"><span class="lnk"><i class="d">5508</i>-<i class="d">14</i></span></div>
<div class="inp" style="left:358px;top:389px;width:75px;height:17px"><span>EL<i class="d">1</i>/<i class="d">2</i></span></div>
<svg class="a" style="left:437px;top:385px" width="19" height="19" viewBox="0 0 19 19"><line x1="2" y1="16.8" x2="8.4" y2="10.6" stroke="#686868" stroke-width="2.8" stroke-linecap="round"/><circle cx="12" cy="6" r="5.2" fill="url(#mgrad)" stroke="#7c7c7c" stroke-width="1.6"/><path d="M9.6 8.2 Q9.2 5.2 12 4.2" stroke="#a8a8a8" stroke-width="1" fill="none"/></svg>
<div class="inp" style="left:469px;top:387px;width:135px;height:17px"><span>ELA<i class="d">403</i>-WP<i class="d">3043</i>/<i class="d">4</i>In</span></div>
<div class="inp" style="left:621px;top:387px;width:51px;height:17px"><span>A<i class="d">403</i>-W</span></div>
<div class="inp" style="left:681px;top:387px;width:63px;height:17px"><span></span></div>
<div class="inp" style="left:755px;top:387px;width:63px;height:17px"><span><i class="d">4</i>.<i class="d">0000</i></span></div>
<div class="inp" style="left:828px;top:387px;width:63px;height:17px"><span><i class="d">0</i>.<i class="d">3000</i></span></div>
<div class="inp" style="left:902px;top:387px;width:69px;height:17px"><span></span></div>
<div class="inp" style="left:982px;top:387px;width:63px;height:17px"><span></span></div>
<div class="btn pur" style="left:1056px;top:386px;width:36px;height:20px"><span style="top:4px">Add</span></div>
<div class="t" style="left:1207px;top:391px;"><i class="d">0048</i></div>
<div class="inp" style="left:1292px;top:387px;width:63px;height:17px"><span></span></div>
<div class="inp" style="left:1419px;top:387px;width:125px;height:17px"><span></span></div>
<div class="sep" style="left:0px;top:437px;width:1096px"></div>
<div class="sep" style="left:1204px;top:437px;width:178px"></div>
<div class="sep" style="left:1416px;top:437px;width:125px"></div>
<div class="cb" style="left:7px;top:417px"></div>
<div class="t" style="left:50px;top:419px;"><i class="d">0015</i></div>
<div class="inp" style="left:95px;top:415px;width:52px;height:17px"><span><i class="d">1</i>.<i class="d">00</i></span></div>
<div class="inp" style="left:156px;top:415px;width:45px;height:17px"><span>Each</span></div>
<div class="t" style="left:210px;top:419px;"><span class="lnk"><i class="d">5508</i>-<i class="d">15</i></span></div>
<div class="inp" style="left:358px;top:417px;width:75px;height:17px"><span>EL<i class="d">1</i>/<i class="d">2</i></span></div>
<svg class="a" style="left:437px;top:413px" width="19" height="19" viewBox="0 0 19 19"><line x1="2" y1="16.8" x2="8.4" y2="10.6" stroke="#686868" stroke-width="2.8" stroke-linecap="round"/><circle cx="12" cy="6" r="5.2" fill="url(#mgrad)" stroke="#7c7c7c" stroke-width="1.6"/><path d="M9.6 8.2 Q9.2 5.2 12 4.2" stroke="#a8a8a8" stroke-width="1" fill="none"/></svg>
<div class="inp" style="left:469px;top:415px;width:135px;height:17px"><span>ELA<i class="d">403</i>-WP<i class="d">3043</i>/<i class="d">4</i>In</span></div>
<div class="inp" style="left:621px;top:415px;width:51px;height:17px"><span>A<i class="d">403</i>-W</span></div>
<div class="inp" style="left:681px;top:415px;width:63px;height:17px"><span></span></div>
<div class="inp" style="left:755px;top:415px;width:63px;height:17px"><span><i class="d">4</i>.<i class="d">0000</i></span></div>
<div class="inp" style="left:828px;top:415px;width:63px;height:17px"><span><i class="d">0</i>.<i class="d">3000</i></span></div>
<div class="inp" style="left:902px;top:415px;width:69px;height:17px"><span></span></div>
<div class="inp" style="left:982px;top:415px;width:63px;height:17px"><span></span></div>
<div class="btn pur" style="left:1056px;top:414px;width:36px;height:20px"><span style="top:4px">Add</span></div>
<div class="t" style="left:1207px;top:419px;"><i class="d">0048</i></div>
<div class="inp" style="left:1292px;top:415px;width:63px;height:17px"><span></span></div>
<div class="inp" style="left:1419px;top:415px;width:125px;height:17px"><span></span></div>
<div class="sep" style="left:0px;top:464px;width:1163px"></div>
<div class="sep" style="left:1204px;top:464px;width:178px"></div>
<div class="sep" style="left:1416px;top:464px;width:125px"></div>
<div class="cb" style="left:7px;top:444px"></div>
<div class="t" style="left:50px;top:446px;"><i class="d">0016</i></div>
<div class="inp" style="left:95px;top:442px;width:52px;height:17px"><span><i class="d">1</i>.<i class="d">00</i></span></div>
<div class="inp" style="left:156px;top:442px;width:45px;height:17px"><span>Each</span></div>
<div class="t" style="left:210px;top:446px;"><span class="lnk"><i class="d">5508</i>-<i class="d">16</i></span></div>
<div class="inp" style="left:358px;top:444px;width:75px;height:17px"><span>EL<i class="d">1</i>/<i class="d">2</i></span></div>
<svg class="a" style="left:437px;top:440px" width="19" height="19" viewBox="0 0 19 19"><line x1="2" y1="16.8" x2="8.4" y2="10.6" stroke="#686868" stroke-width="2.8" stroke-linecap="round"/><circle cx="12" cy="6" r="5.2" fill="url(#mgrad)" stroke="#7c7c7c" stroke-width="1.6"/><path d="M9.6 8.2 Q9.2 5.2 12 4.2" stroke="#a8a8a8" stroke-width="1" fill="none"/></svg>
<div class="inp" style="left:469px;top:442px;width:135px;height:17px"><span>ELA<i class="d">403</i>-WP<i class="d">3043</i>/<i class="d">4</i>In</span></div>
<div class="inp" style="left:621px;top:442px;width:51px;height:17px"><span>A<i class="d">403</i>-W</span></div>
<div class="inp" style="left:681px;top:442px;width:63px;height:17px"><span></span></div>
<div class="inp" style="left:755px;top:442px;width:63px;height:17px"><span><i class="d">4</i>.<i class="d">0000</i></span></div>
<div class="inp" style="left:828px;top:442px;width:63px;height:17px"><span><i class="d">0</i>.<i class="d">3000</i></span></div>
<div class="inp" style="left:902px;top:442px;width:69px;height:17px"><span></span></div>
<div class="inp" style="left:982px;top:442px;width:63px;height:17px"><span></span></div>
<div class="btn pur" style="left:1056px;top:441px;width:36px;height:20px"><span style="top:4px">Add</span></div>
<svg class="a" style="left:1099px;top:440px" width="19" height="19" viewBox="0 0 19 19"><line x1="2" y1="16.8" x2="8.4" y2="10.6" stroke="#686868" stroke-width="2.8" stroke-linecap="round"/><circle cx="12" cy="6" r="5.2" fill="url(#mgrad)" stroke="#7c7c7c" stroke-width="1.6"/><path d="M9.6 8.2 Q9.2 5.2 12 4.2" stroke="#a8a8a8" stroke-width="1" fill="none"/></svg>
<div class="t" style="left:1121px;top:449px;">sent</div>
<div class="t" style="left:1207px;top:444px;"><span style="color:#1a1a9a;text-decoration:underline;text-underline-offset:3px;font-size:13.5px;letter-spacing:1.3px">[U<span style="letter-spacing:0">]</span></span></div>
<div class="inp" style="left:1292px;top:442px;width:63px;height:17px"><span></span></div>
<div class="inp" style="left:1419px;top:442px;width:125px;height:17px"><span></span></div>
<div class="sep" style="left:0px;top:491px;width:1163px"></div>
<div class="sep" style="left:1204px;top:491px;width:178px"></div>
<div class="sep" style="left:1416px;top:491px;width:125px"></div>
<div class="cb" style="left:7px;top:471px"></div>
<div class="t" style="left:50px;top:473px;"><i class="d">0017</i></div>
<div class="inp" style="left:95px;top:469px;width:52px;height:17px"><span><i class="d">1</i>.<i class="d">00</i></span></div>
<div class="inp" style="left:156px;top:469px;width:45px;height:17px"><span>Each</span></div>
<div class="t" style="left:210px;top:473px;"><span class="lnk"><i class="d">5508</i>-<i class="d">17</i></span></div>
<div class="inp" style="left:358px;top:471px;width:75px;height:17px"><span>EL<i class="d">1</i>/<i class="d">2</i></span></div>
<svg class="a" style="left:437px;top:467px" width="19" height="19" viewBox="0 0 19 19"><line x1="2" y1="16.8" x2="8.4" y2="10.6" stroke="#686868" stroke-width="2.8" stroke-linecap="round"/><circle cx="12" cy="6" r="5.2" fill="url(#mgrad)" stroke="#7c7c7c" stroke-width="1.6"/><path d="M9.6 8.2 Q9.2 5.2 12 4.2" stroke="#a8a8a8" stroke-width="1" fill="none"/></svg>
<div class="inp" style="left:469px;top:469px;width:135px;height:17px"><span>ELA<i class="d">403</i>-WP<i class="d">3043</i>/<i class="d">4</i>In</span></div>
<div class="inp" style="left:621px;top:469px;width:51px;height:17px"><span>A<i class="d">403</i>-W</span></div>
<div class="inp" style="left:681px;top:469px;width:63px;height:17px"><span></span></div>
<div class="inp" style="left:755px;top:469px;width:63px;height:17px"><span><i class="d">4</i>.<i class="d">0000</i></span></div>
<div class="inp" style="left:828px;top:469px;width:63px;height:17px"><span><i class="d">0</i>.<i class="d">3000</i></span></div>
<div class="inp" style="left:902px;top:469px;width:69px;height:17px"><span></span></div>
<div class="inp" style="left:982px;top:469px;width:63px;height:17px"><span></span></div>
<div class="btn pur" style="left:1056px;top:468px;width:36px;height:20px"><span style="top:4px">Add</span></div>
<svg class="a" style="left:1099px;top:467px" width="19" height="19" viewBox="0 0 19 19"><line x1="2" y1="16.8" x2="8.4" y2="10.6" stroke="#686868" stroke-width="2.8" stroke-linecap="round"/><circle cx="12" cy="6" r="5.2" fill="url(#mgrad)" stroke="#7c7c7c" stroke-width="1.6"/><path d="M9.6 8.2 Q9.2 5.2 12 4.2" stroke="#a8a8a8" stroke-width="1" fill="none"/></svg>
<div class="t" style="left:1121px;top:476px;">sent</div>
<div class="t" style="left:1207px;top:471px;"><span style="color:#1a1a9a;text-decoration:underline;text-underline-offset:3px;font-size:13.5px;letter-spacing:1.3px">[U<span style="letter-spacing:0">]</span></span></div>
<div class="inp" style="left:1292px;top:469px;width:63px;height:17px"><span></span></div>
<div class="inp" style="left:1419px;top:469px;width:125px;height:17px"><span></span></div>
<div class="sep" style="left:0px;top:519px;width:1163px"></div>
<div class="sep" style="left:1204px;top:519px;width:178px"></div>
<div class="sep" style="left:1416px;top:519px;width:125px"></div>
<div class="cb" style="left:7px;top:499px"></div>
<div class="t" style="left:50px;top:501px;"><i class="d">0018</i></div>
<div class="inp" style="left:95px;top:497px;width:52px;height:17px"><span><i class="d">1</i>.<i class="d">00</i></span></div>
<div class="inp" style="left:156px;top:497px;width:45px;height:17px"><span>Each</span></div>
<div class="t" style="left:210px;top:501px;"><span class="lnk"><i class="d">5508</i>-<i class="d">18</i></span></div>
<div class="inp" style="left:358px;top:499px;width:75px;height:17px"><span>EL<i class="d">1</i>/<i class="d">2</i></span></div>
<svg class="a" style="left:437px;top:495px" width="19" height="19" viewBox="0 0 19 19"><line x1="2" y1="16.8" x2="8.4" y2="10.6" stroke="#686868" stroke-width="2.8" stroke-linecap="round"/><circle cx="12" cy="6" r="5.2" fill="url(#mgrad)" stroke="#7c7c7c" stroke-width="1.6"/><path d="M9.6 8.2 Q9.2 5.2 12 4.2" stroke="#a8a8a8" stroke-width="1" fill="none"/></svg>
<div class="inp" style="left:469px;top:497px;width:135px;height:17px"><span>ELA<i class="d">403</i>-WP<i class="d">3043</i>/<i class="d">4</i>In</span></div>
<div class="inp" style="left:621px;top:497px;width:51px;height:17px"><span>A<i class="d">403</i>-W</span></div>
<div class="inp" style="left:681px;top:497px;width:63px;height:17px"><span></span></div>
<div class="inp" style="left:755px;top:497px;width:63px;height:17px"><span><i class="d">4</i>.<i class="d">0000</i></span></div>
<div class="inp" style="left:828px;top:497px;width:63px;height:17px"><span><i class="d">0</i>.<i class="d">3000</i></span></div>
<div class="inp" style="left:902px;top:497px;width:69px;height:17px"><span></span></div>
<div class="inp" style="left:982px;top:497px;width:63px;height:17px"><span></span></div>
<div class="btn pur" style="left:1056px;top:496px;width:36px;height:20px"><span style="top:4px">Add</span></div>
<svg class="a" style="left:1099px;top:495px" width="19" height="19" viewBox="0 0 19 19"><line x1="2" y1="16.8" x2="8.4" y2="10.6" stroke="#686868" stroke-width="2.8" stroke-linecap="round"/><circle cx="12" cy="6" r="5.2" fill="url(#mgrad)" stroke="#7c7c7c" stroke-width="1.6"/><path d="M9.6 8.2 Q9.2 5.2 12 4.2" stroke="#a8a8a8" stroke-width="1" fill="none"/></svg>
<div class="t" style="left:1121px;top:504px;">sent</div>
<div class="t" style="left:1207px;top:499px;"><span style="color:#1a1a9a;text-decoration:underline;text-underline-offset:3px;font-size:13.5px;letter-spacing:1.3px">[U<span style="letter-spacing:0">]</span></span></div>
<div class="inp" style="left:1292px;top:497px;width:63px;height:17px"><span></span></div>
<div class="inp" style="left:1419px;top:497px;width:125px;height:17px"><span></span></div>
<div class="sep" style="left:0px;top:546px;width:1163px"></div>
<div class="sep" style="left:1204px;top:546px;width:178px"></div>
<div class="sep" style="left:1416px;top:546px;width:125px"></div>
<div class="cb" style="left:7px;top:526px"></div>
<div class="t" style="left:50px;top:528px;"><i class="d">0019</i></div>
<div class="inp" style="left:95px;top:524px;width:52px;height:17px"><span><i class="d">1</i>.<i class="d">00</i></span></div>
<div class="inp" style="left:156px;top:524px;width:45px;height:17px"><span>Each</span></div>
<div class="t" style="left:210px;top:528px;"><span class="lnk"><i class="d">5508</i>-<i class="d">19</i></span></div>
<div class="inp" style="left:358px;top:526px;width:75px;height:17px"><span>EL<i class="d">1</i>/<i class="d">2</i></span></div>
<svg class="a" style="left:437px;top:522px" width="19" height="19" viewBox="0 0 19 19"><line x1="2" y1="16.8" x2="8.4" y2="10.6" stroke="#686868" stroke-width="2.8" stroke-linecap="round"/><circle cx="12" cy="6" r="5.2" fill="url(#mgrad)" stroke="#7c7c7c" stroke-width="1.6"/><path d="M9.6 8.2 Q9.2 5.2 12 4.2" stroke="#a8a8a8" stroke-width="1" fill="none"/></svg>
<div class="inp" style="left:469px;top:524px;width:135px;height:17px"><span>ELA<i class="d">403</i>-WP<i class="d">3043</i>/<i class="d">4</i>In</span></div>
<div class="inp" style="left:621px;top:524px;width:51px;height:17px"><span>A<i class="d">403</i>-W</span></div>
<div class="inp" style="left:681px;top:524px;width:63px;height:17px"><span></span></div>
<div class="inp" style="left:755px;top:524px;width:63px;height:17px"><span><i class="d">4</i>.<i class="d">0000</i></span></div>
<div class="inp" style="left:828px;top:524px;width:63px;height:17px"><span><i class="d">0</i>.<i class="d">3000</i></span></div>
<div class="inp" style="left:902px;top:524px;width:69px;height:17px"><span></span></div>
<div class="inp" style="left:982px;top:524px;width:63px;height:17px"><span></span></div>
<div class="btn pur" style="left:1056px;top:523px;width:36px;height:20px"><span style="top:4px">Add</span></div>
<svg class="a" style="left:1099px;top:522px" width="19" height="19" viewBox="0 0 19 19"><line x1="2" y1="16.8" x2="8.4" y2="10.6" stroke="#686868" stroke-width="2.8" stroke-linecap="round"/><circle cx="12" cy="6" r="5.2" fill="url(#mgrad)" stroke="#7c7c7c" stroke-width="1.6"/><path d="M9.6 8.2 Q9.2 5.2 12 4.2" stroke="#a8a8a8" stroke-width="1" fill="none"/></svg>
<div class="t" style="left:1121px;top:531px;">sent</div>
<div class="t" style="left:1207px;top:526px;"><span style="color:#1a1a9a;text-decoration:underline;text-underline-offset:3px;font-size:13.5px;letter-spacing:1.3px">[U<span style="letter-spacing:0">]</span></span></div>
<div class="inp" style="left:1292px;top:524px;width:63px;height:17px"><span></span></div>
<div class="inp" style="left:1419px;top:524px;width:125px;height:17px"><span></span></div>
<div class="sep" style="left:0px;top:573px;width:1163px"></div>
<div class="sep" style="left:1204px;top:573px;width:178px"></div>
<div class="sep" style="left:1416px;top:573px;width:125px"></div>
<div class="cb" style="left:7px;top:553px"></div>
<div class="t" style="left:50px;top:555px;"><i class="d">0020</i></div>
<div class="inp" style="left:95px;top:551px;width:52px;height:17px"><span><i class="d">1</i>.<i class="d">00</i></span></div>
<div class="inp" style="left:156px;top:551px;width:45px;height:17px"><span>Each</span></div>
<div class="t" style="left:210px;top:555px;"><span class="lnk"><i class="d">5508</i>-<i class="d">20</i></span></div>
<div class="inp" style="left:358px;top:553px;width:75px;height:17px"><span>EL<i class="d">1</i>/<i class="d">2</i></span></div>
<svg class="a" style="left:437px;top:549px" width="19" height="19" viewBox="0 0 19 19"><line x1="2" y1="16.8" x2="8.4" y2="10.6" stroke="#686868" stroke-width="2.8" stroke-linecap="round"/><circle cx="12" cy="6" r="5.2" fill="url(#mgrad)" stroke="#7c7c7c" stroke-width="1.6"/><path d="M9.6 8.2 Q9.2 5.2 12 4.2" stroke="#a8a8a8" stroke-width="1" fill="none"/></svg>
<div class="inp" style="left:469px;top:551px;width:135px;height:17px"><span>ELA<i class="d">403</i>-WP<i class="d">3043</i>/<i class="d">4</i>In</span></div>
<div class="inp" style="left:621px;top:551px;width:51px;height:17px"><span>A<i class="d">403</i>-W</span></div>
<div class="inp" style="left:681px;top:551px;width:63px;height:17px"><span></span></div>
<div class="inp" style="left:755px;top:551px;width:63px;height:17px"><span><i class="d">4</i>.<i class="d">0000</i></span></div>
<div class="inp" style="left:828px;top:551px;width:63px;height:17px"><span><i class="d">0</i>.<i class="d">3000</i></span></div>
<div class="inp" style="left:902px;top:551px;width:69px;height:17px"><span></span></div>
<div class="inp" style="left:982px;top:551px;width:63px;height:17px"><span></span></div>
<div class="btn pur" style="left:1056px;top:550px;width:36px;height:20px"><span style="top:4px">Add</span></div>
<svg class="a" style="left:1099px;top:549px" width="19" height="19" viewBox="0 0 19 19"><line x1="2" y1="16.8" x2="8.4" y2="10.6" stroke="#686868" stroke-width="2.8" stroke-linecap="round"/><circle cx="12" cy="6" r="5.2" fill="url(#mgrad)" stroke="#7c7c7c" stroke-width="1.6"/><path d="M9.6 8.2 Q9.2 5.2 12 4.2" stroke="#a8a8a8" stroke-width="1" fill="none"/></svg>
<div class="t" style="left:1121px;top:558px;">sent</div>
<div class="t" style="left:1207px;top:553px;"><span style="color:#1a1a9a;text-decoration:underline;text-underline-offset:3px;font-size:13.5px;letter-spacing:1.3px">[U<span style="letter-spacing:0">]</span></span></div>
<div class="inp" style="left:1292px;top:551px;width:63px;height:17px"><span></span></div>
<div class="inp" style="left:1419px;top:551px;width:125px;height:17px"><span></span></div>
<div class="sep" style="left:0px;top:601px;width:1163px"></div>
<div class="sep" style="left:1204px;top:601px;width:178px"></div>
<div class="sep" style="left:1416px;top:601px;width:125px"></div>
<div class="cb" style="left:7px;top:581px"></div>
<div class="t" style="left:50px;top:583px;"><i class="d">0021</i></div>
<div class="inp" style="left:95px;top:579px;width:52px;height:17px"><span><i class="d">1</i>.<i class="d">00</i></span></div>
<div class="inp" style="left:156px;top:579px;width:45px;height:17px"><span>Each</span></div>
<div class="t" style="left:210px;top:583px;"><span class="lnk"><i class="d">5508</i>-<i class="d">21</i></span></div>
<div class="inp" style="left:358px;top:581px;width:75px;height:17px"><span>EL<i class="d">1</i>/<i class="d">2</i></span></div>
<svg class="a" style="left:437px;top:577px" width="19" height="19" viewBox="0 0 19 19"><line x1="2" y1="16.8" x2="8.4" y2="10.6" stroke="#686868" stroke-width="2.8" stroke-linecap="round"/><circle cx="12" cy="6" r="5.2" fill="url(#mgrad)" stroke="#7c7c7c" stroke-width="1.6"/><path d="M9.6 8.2 Q9.2 5.2 12 4.2" stroke="#a8a8a8" stroke-width="1" fill="none"/></svg>
<div class="inp" style="left:469px;top:579px;width:135px;height:17px"><span>ELA<i class="d">403</i>-WP<i class="d">3043</i>/<i class="d">4</i>In</span></div>
<div class="inp" style="left:621px;top:579px;width:51px;height:17px"><span>A<i class="d">403</i>-W</span></div>
<div class="inp" style="left:681px;top:579px;width:63px;height:17px"><span></span></div>
<div class="inp" style="left:755px;top:579px;width:63px;height:17px"><span><i class="d">4</i>.<i class="d">0000</i></span></div>
<div class="inp" style="left:828px;top:579px;width:63px;height:17px"><span><i class="d">0</i>.<i class="d">3000</i></span></div>
<div class="inp" style="left:902px;top:579px;width:69px;height:17px"><span></span></div>
<div class="inp" style="left:982px;top:579px;width:63px;height:17px"><span></span></div>
<div class="btn pur" style="left:1056px;top:578px;width:36px;height:20px"><span style="top:4px">Add</span></div>
<svg class="a" style="left:1099px;top:577px" width="19" height="19" viewBox="0 0 19 19"><line x1="2" y1="16.8" x2="8.4" y2="10.6" stroke="#686868" stroke-width="2.8" stroke-linecap="round"/><circle cx="12" cy="6" r="5.2" fill="url(#mgrad)" stroke="#7c7c7c" stroke-width="1.6"/><path d="M9.6 8.2 Q9.2 5.2 12 4.2" stroke="#a8a8a8" stroke-width="1" fill="none"/></svg>
<div class="t" style="left:1121px;top:586px;">sent</div>
<div class="t" style="left:1207px;top:581px;"><span style="color:#1a1a9a;text-decoration:underline;text-underline-offset:3px;font-size:13.5px;letter-spacing:1.3px">[U<span style="letter-spacing:0">]</span></span></div>
<div class="inp" style="left:1292px;top:579px;width:63px;height:17px"><span></span></div>
<div class="inp" style="left:1419px;top:579px;width:125px;height:17px"><span></span></div>
<div class="cb" style="left:7px;top:608px"></div>
<div class="t" style="left:50px;top:610px;"><i class="d">0022</i></div>
<div class="inp" style="left:95px;top:606px;width:52px;height:17px"><span><i class="d">1</i>.<i class="d">00</i></span></div>
<div class="inp" style="left:156px;top:606px;width:45px;height:17px"><span>Each</span></div>
<div class="t" style="left:210px;top:610px;"><span class="lnk"><i class="d">5508</i>-<i class="d">22</i></span></div>
<div class="inp" style="left:358px;top:608px;width:75px;height:17px"><span>EL<i class="d">1</i>/<i class="d">2</i></span></div>
<svg class="a" style="left:437px;top:604px" width="19" height="19" viewBox="0 0 19 19"><line x1="2" y1="16.8" x2="8.4" y2="10.6" stroke="#686868" stroke-width="2.8" stroke-linecap="round"/><circle cx="12" cy="6" r="5.2" fill="url(#mgrad)" stroke="#7c7c7c" stroke-width="1.6"/><path d="M9.6 8.2 Q9.2 5.2 12 4.2" stroke="#a8a8a8" stroke-width="1" fill="none"/></svg>
<div class="inp" style="left:469px;top:606px;width:135px;height:17px"><span>ELA<i class="d">403</i>-WP<i class="d">3043</i>/<i class="d">4</i>In</span></div>
<div class="inp" style="left:621px;top:606px;width:51px;height:17px"><span>A<i class="d">403</i>-W</span></div>
<div class="inp" style="left:681px;top:606px;width:63px;height:17px"><span></span></div>
<div class="inp" style="left:755px;top:606px;width:63px;height:17px"><span><i class="d">4</i>.<i class="d">0000</i></span></div>
<div class="inp" style="left:828px;top:606px;width:63px;height:17px"><span><i class="d">0</i>.<i class="d">3000</i></span></div>
<div class="inp" style="left:902px;top:606px;width:69px;height:17px"><span></span></div>
<div class="inp" style="left:982px;top:606px;width:63px;height:17px"><span></span></div>
<div class="btn pur" style="left:1056px;top:605px;width:36px;height:20px"><span style="top:4px">Add</span></div>
<svg class="a" style="left:1099px;top:604px" width="19" height="19" viewBox="0 0 19 19"><line x1="2" y1="16.8" x2="8.4" y2="10.6" stroke="#686868" stroke-width="2.8" stroke-linecap="round"/><circle cx="12" cy="6" r="5.2" fill="url(#mgrad)" stroke="#7c7c7c" stroke-width="1.6"/><path d="M9.6 8.2 Q9.2 5.2 12 4.2" stroke="#a8a8a8" stroke-width="1" fill="none"/></svg>
<div class="t" style="left:1121px;top:613px;">sent</div>
<div class="t" style="left:1207px;top:608px;"><span style="color:#1a1a9a;text-decoration:underline;text-underline-offset:3px;font-size:13.5px;letter-spacing:1.3px">[U<span style="letter-spacing:0">]</span></span></div>
<div class="inp" style="left:1292px;top:606px;width:63px;height:17px"><span></span></div>
<div class="inp" style="left:1419px;top:606px;width:125px;height:17px"><span></span></div>
</div>
<div class="btn " style="left:16px;top:975px;width:44px;height:20px"><span style="top:4px">Save</span></div>
<div class="inp2" style="left:78px;top:975px;width:29px;height:20px"><span style="top:4px"><i class="d">5</i></span></div>
<div class="btn grn" style="left:106px;top:975px;width:113px;height:20px"><span style="top:4px">Add More Lines</span></div>
<div class="btn pur" style="left:265px;top:975px;width:156px;height:20px"><span style="top:4px">Save as New Revision</span></div>
<div class="a" style="left:472px;top:974px;width:105px;height:22px;border:1px solid #4e5866;border-radius:2px;background:linear-gradient(#f8fafc,#e6eaee)"><div class="a" style="left:5px;top:3px;width:11px;height:14px;background:#fff;border:1px solid #a09890"></div><div class="a" style="left:11px;top:8px;width:10px;height:10px;border-radius:50%;background:radial-gradient(circle at 40% 35%,#9fd0ff,#1a64c8 60%,#0a3a8a)"></div><span class="a" style="left:26px;top:4px;font-size:11.5px;font-weight:bold;color:#3a4656;letter-spacing:0.2px">IMPORT CSV</span></div>
<div class="t b" style="left:640px;top:980px;">Material Cost</div>
<div class="t" style="left:742px;top:980px;"><i class="d">87</i>.<i class="d">00</i></div>
<div class="t b" style="left:811px;top:980px;">Material Sell</div>
<div class="t" style="left:912px;top:980px;"><i class="d">224</i>.<i class="d">25</i></div>
<div class="t b" style="left:998px;top:980px;">Material Profit%</div>
<div class="cb" style="left:1117px;top:977px"></div>
<div class="inp2" style="left:1135px;top:976px;width:65px;height:20px"><span style="top:4px"><i class="d">157</i>.<i class="d">76</i></span></div>
<div class="t b" style="left:1254px;top:980px;">Profit Total</div>
<div class="t" style="left:1345px;top:980px;"><i class="d">137</i>.<i class="d">25</i></div>
<div class="t b" style="left:1410px;top:980px;">Markup:</div>
<div class="t" style="left:1486px;top:980px;"><i class="d">157</i>.<i class="d">77</i>%</div>
<div class="btn " style="left:16px;top:1003px;width:97px;height:20px"><span style="top:4px">Create Items</span></div>
<div class="btn " style="left:117px;top:1003px;width:90px;height:20px"><span style="top:4px">Create BOM</span></div>
<div class="btn " style="left:211px;top:1003px;width:90px;height:20px"><span style="top:4px">Create BOO</span></div>
<div class="btn " style="left:306px;top:1003px;width:124px;height:20px"><span style="top:4px">Create Teardown</span></div>
<div class="btn pur" style="left:435px;top:1003px;width:70px;height:20px"><span style="top:4px">View Job</span></div>
<div class="btn " style="left:510px;top:1003px;width:81px;height:20px"><span style="top:4px">Create Job</span></div>
<div class="btn " style="left:596px;top:1003px;width:138px;height:20px"><span style="top:4px">Create Work Order</span></div>
<div class="t b" style="left:739px;top:1008px;letter-spacing:0.45px">Labor Cost</div>
<div class="t" style="left:814px;top:1008px;"><i class="d">1</i>,<i class="d">289</i>.<i class="d">02</i></div>
<div class="t b" style="left:878px;top:1008px;">Labor Sell</div>
<div class="inp2" style="left:950px;top:1003px;width:65px;height:20px"><span style="top:4px"><i class="d">3125</i>.<i class="d">61</i></span></div>
<div class="t b" style="left:1020px;top:1008px;">Labor Profit%</div>
<div class="inp2" style="left:1118px;top:1003px;width:65px;height:20px"><span style="top:4px"><i class="d">242</i>.<i class="d">48</i></span></div>
<div class="a" style="left:1555px;top:51px;width:15px;height:997px;background:linear-gradient(to right,#eef3fb,#fbfcff 50%,#edf1f9);border-left:1px solid #e4eaf4"></div>
<div class="a" style="left:1556px;top:51px;width:14px;height:18px;border:1px solid #aebcd2;border-radius:2px;background:linear-gradient(to right,#e8f0fc,#c4d4ee)"><svg class="a" style="left:2px;top:5px" width="9" height="6"><path d="M1 5 L4.5 1.5 L8 5" stroke="#4d6185" stroke-width="2" fill="none"/></svg></div>
<div class="a" style="left:1556px;top:69px;width:14px;height:917px;border:1px solid #8a96aa;border-radius:2px;background:linear-gradient(to right,#e4eefc,#d0e0f6 50%,#bccfea)"></div>
<div class="a" style="left:1560px;top:523px;width:7px;height:8px;background:repeating-linear-gradient(#7f8ea6 0 1px,#f4f8ff 1px 2px)"></div>
<div class="a" style="left:1556px;top:1030px;width:14px;height:17px;border:1px solid #aebcd2;border-radius:2px;background:linear-gradient(to right,#e8f0fc,#c4d4ee)"><svg class="a" style="left:2px;top:5px" width="9" height="6"><path d="M1 1 L4.5 4.5 L8 1" stroke="#4d6185" stroke-width="2" fill="none"/></svg></div>
<div class="a" style="left:4px;top:1047px;width:1551px;height:17px;background:linear-gradient(#eef3fb,#fbfcff 50%,#edf1f9);border-top:1px solid #e4eaf4"></div>
<div class="a" style="left:4px;top:1048px;width:17px;height:16px;border:1px solid #aebcd2;border-radius:2px;background:linear-gradient(#e8f0fc,#c4d4ee)"><svg class="a" style="left:4px;top:3px" width="6" height="9"><path d="M5 1 L1.5 4.5 L5 8" stroke="#4d6185" stroke-width="2" fill="none"/></svg></div>
<div class="a" style="left:22px;top:1048px;width:1456px;height:16px;border:1px solid #8a96aa;border-radius:2px;background:linear-gradient(#e4eefc,#d0e0f6 50%,#bccfea)"></div>
<div class="a" style="left:745px;top:1052px;width:8px;height:7px;background:repeating-linear-gradient(to right,#7f8ea6 0 1px,#f4f8ff 1px 2px)"></div>
<div class="a" style="left:1537px;top:1048px;width:17px;height:16px;border:1px solid #aebcd2;border-radius:2px;background:linear-gradient(#e8f0fc,#c4d4ee)"><svg class="a" style="left:5px;top:3px" width="6" height="9"><path d="M1 1 L4.5 4.5 L1 8" stroke="#4d6185" stroke-width="2" fill="none"/></svg></div>
<div class="a" style="left:1555px;top:1047px;width:15px;height:17px;background:#ebe7ea"></div>
<div class="a" style="left:4px;top:1064px;width:1566px;height:22px;background:linear-gradient(#f4f7fb,#edf1f7 60%,#eef2f8)"></div>
<div class="a" style="left:9px;top:1069px;font-size:11px;color:#000">Done</div>
<div class="a" style="left:0;top:30px;width:1px;height:1058px;background:#2860b0"></div>
<div class="a" style="left:1px;top:30px;width:2px;height:1058px;background:#7aaaf0"></div>
<div class="a" style="left:3px;top:30px;width:1px;height:1058px;background:#2a4070"></div>
<div class="a" style="left:1570px;top:30px;width:2px;height:1058px;background:#2a4a80"></div>
<div class="a" style="left:1572px;top:30px;width:2px;height:1058px;background:#7aaaf0"></div>
<div class="a" style="left:1574px;top:30px;width:1px;height:1058px;background:#2860b0"></div>
<div class="a" style="left:0;top:1086px;width:1575px;height:1px;background:#2a4070"></div>
<div class="a" style="left:0;top:1087px;width:1575px;height:1px;background:#2860b0"></div>
</body></html>
